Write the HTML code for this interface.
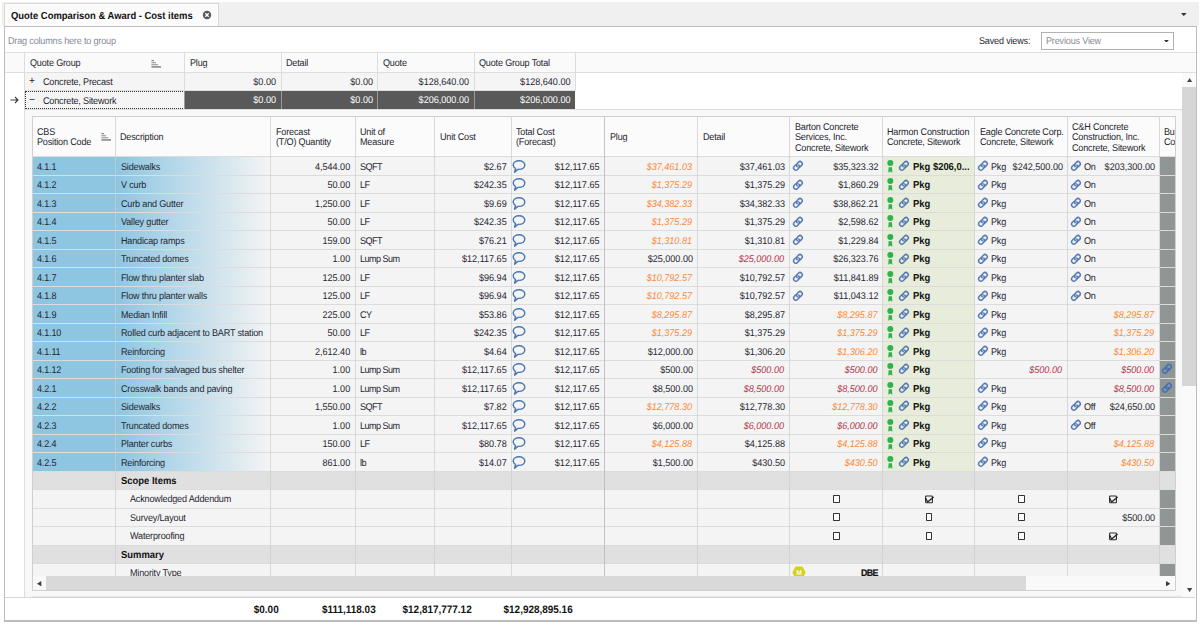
<!DOCTYPE html>
<html><head><meta charset="utf-8"><title>Quote Comparison</title><style>
html,body{margin:0;padding:0;background:#fff;}
body{width:1200px;height:625px;position:relative;overflow:hidden;font-family:"Liberation Sans",sans-serif;font-size:11px;color:#222;text-rendering:geometricPrecision;}
.ab{position:absolute;}
.t{white-space:nowrap;font-size:9.8px;letter-spacing:-0.19px;color:#262630;transform:scaleX(0.925);transform-origin:0 50%;}
.b{font-weight:bold;color:#111;font-size:10.2px;letter-spacing:0;}
.bs{font-family:"Liberation Sans",sans-serif;}
.ra{text-align:right;letter-spacing:0;font-size:9.8px;transform-origin:100% 50%;}
.ra.b{font-size:10.2px;}
.o{color:#fb8935;font-style:italic;margin-left:-1px;}
.r{color:#b4354d;font-style:italic;margin-left:-1px;}
.vl{width:1px;background:#dcdcdc;}
.na{background:rgba(205,205,205,0.72);}
.vd{background:rgba(186,186,186,0.85);}
.hl{height:1px;background:#dcdcdc;}
.cb{width:6.6px;height:7.6px;box-sizing:border-box;border:1.1px solid #333;border-radius:0.8px;background:#fdfdfd;}
</style></head><body>
<div class="ab" style="left:2px;top:2px;width:1197px;height:24px;background:#f0f0f0"></div>
<div class="ab" style="left:4px;top:3.4px;width:215px;height:23.6px;background:#fbfbfb;border:1px solid #d8d8d8;border-bottom:none;box-sizing:border-box"></div>
<div class="ab t b" style="left:11px;top:5.5px;height:22px;line-height:22px;font-size:10.2px">Quote Comparison &amp; Award - Cost items</div>
<svg class="ab" style="left:202px;top:10px" width="10" height="10" viewBox="0 0 10 10"><circle cx="5" cy="5" r="4.2" fill="#555"/><path d="M3.3 3.3 L6.7 6.7 M6.7 3.3 L3.3 6.7" stroke="#fff" stroke-width="1.3"/></svg>
<svg class="ab" style="left:1181.4px;top:12.9px" width="5.6" height="3.1" viewBox="0 0 5.6 3.1"><polygon points="0,0 5.6,0 2.8,3.1" fill="#333"/></svg>
<div class="ab" style="left:4px;top:25.5px;width:1193px;height:596.5px;background:#fff;border:1px solid #bdbdbd;border-bottom:2px solid #bcbcbc;box-sizing:border-box"></div>
<div class="ab t" style="left:8px;top:33px;height:18px;line-height:18px;color:#858b9a">Drag columns here to group</div>
<div class="ab t" style="left:979px;top:33px;height:18px;line-height:18px;">Saved views:</div>
<div class="ab" style="left:1041px;top:32px;width:132.8px;height:17.5px;border:1px solid #b2b2b2;box-sizing:border-box;background:#fff"></div>
<div class="ab t" style="left:1046px;top:33.3px;height:17.5px;line-height:17.5px;color:#8a8a95">Previous View</div>
<svg class="ab" style="left:1164.1px;top:39.7px" width="4.8" height="2.8" viewBox="0 0 4.8 2.8"><polygon points="0,0 4.8,0 2.4,2.8" fill="#333"/></svg>
<div class="ab" style="left:5px;top:52px;width:1191px;height:21px;background:#fafafa;border-top:1px solid #dedede;border-bottom:1px solid #dedede;box-sizing:border-box"></div>
<div class="ab t" style="left:29.5px;top:55.4px;width:100px;height:18px;line-height:18px;">Quote Group</div>
<div class="ab t" style="left:189.5px;top:55.4px;width:100px;height:18px;line-height:18px;">Plug</div>
<div class="ab t" style="left:286.0px;top:55.4px;width:100px;height:18px;line-height:18px;">Detail</div>
<div class="ab t" style="left:382.5px;top:55.4px;width:100px;height:18px;line-height:18px;">Quote</div>
<div class="ab t" style="left:479.0px;top:55.4px;width:100px;height:18px;line-height:18px;">Quote Group Total</div>
<svg class="ab" style="left:151.2px;top:60px" width="11" height="9" viewBox="0 0 11 9"><path d="M0.4 0.6 H3 M0.4 2.7 H5 M0.4 4.8 H7" stroke="#8c8c8c" stroke-width="1.1" fill="none"/><path d="M0.4 6.95 H10" stroke="#6e6e6e" stroke-width="1.3" fill="none"/></svg>
<div class="ab" style="left:25px;top:73px;width:550px;height:17.3px;background:#f5f5f5;border-bottom:1px solid #dedede"></div>
<div class="ab" style="left:25px;top:90.8px;width:550px;height:17.9px;background:#595959"></div>
<div class="ab" style="left:25px;top:90.5px;width:159.5px;height:18.5px;background:#f5f5f5;border:1px dotted #333;box-sizing:border-box"></div>
<div class="ab vl" style="left:24px;top:53px;height:37.5px"></div>
<div class="ab vl" style="left:184px;top:53px;height:37.5px"></div>
<div class="ab vl" style="left:280.5px;top:53px;height:37.5px"></div>
<div class="ab vl" style="left:377px;top:53px;height:37.5px"></div>
<div class="ab vl" style="left:473.5px;top:53px;height:37.5px"></div>
<div class="ab vl" style="left:574.5px;top:53px;height:37.5px"></div>
<div class="ab" style="left:184px;top:90.8px;width:1px;height:17.9px;background:#9a9a9a"></div>
<div class="ab" style="left:280.5px;top:90.8px;width:1px;height:17.9px;background:#9a9a9a"></div>
<div class="ab" style="left:377px;top:90.8px;width:1px;height:17.9px;background:#9a9a9a"></div>
<div class="ab" style="left:473.5px;top:90.8px;width:1px;height:17.9px;background:#9a9a9a"></div>
<div class="ab hl" style="left:25px;top:108.5px;width:1158px"></div>
<div class="ab t" style="left:29px;top:72.4px;width:12px;height:18px;line-height:18px;font-size:11px">+</div>
<div class="ab t" style="left:43.2px;top:73.9px;width:140px;height:18px;line-height:18px;">Concrete, Precast</div>
<div class="ab t" style="left:29px;top:91.2px;width:12px;height:18.5px;line-height:18.5px;font-size:11px">−</div>
<div class="ab t" style="left:43.2px;top:92.9px;width:140px;height:18.5px;line-height:18.5px;">Concrete, Sitework</div>
<svg class="ab" style="left:10px;top:96.3px" width="9" height="8" viewBox="0 0 9 8"><path d="M0.5 4 H8 M5 1 L8 4 L5 7" fill="none" stroke="#383838" stroke-width="1.1"/></svg>
<div class="ab t ra" style="left:184px;top:73.7px;width:92.0px;height:18px;line-height:18px;">$0.00</div>
<div class="ab t ra" style="left:184px;top:91.9px;width:92.0px;height:18.5px;line-height:18.5px;color:#fff">$0.00</div>
<div class="ab t ra" style="left:280.5px;top:73.7px;width:92.0px;height:18px;line-height:18px;">$0.00</div>
<div class="ab t ra" style="left:280.5px;top:91.9px;width:92.0px;height:18.5px;line-height:18.5px;color:#fff">$0.00</div>
<div class="ab t ra" style="left:377px;top:73.7px;width:92.0px;height:18px;line-height:18px;">$128,640.00</div>
<div class="ab t ra" style="left:377px;top:91.9px;width:92.0px;height:18.5px;line-height:18.5px;color:#fff">$206,000.00</div>
<div class="ab t ra" style="left:473.5px;top:73.7px;width:96.5px;height:18px;line-height:18px;">$128,640.00</div>
<div class="ab t ra" style="left:473.5px;top:91.9px;width:96.5px;height:18.5px;line-height:18.5px;color:#fff">$206,000.00</div>
<div class="ab vl" style="left:24px;top:72px;height:525px"></div>
<div class="ab" style="left:25px;top:109.5px;width:1158px;height:487px;background:#f8f8f8"></div>
<div class="ab" style="left:32px;top:116px;width:1143.5px;height:475px;background:#f4f4f4;border:1px solid #cfcfcf;box-sizing:border-box;overflow:hidden"></div>
<div class="ab" style="left:33px;top:117px;width:1141.5px;height:40px;background:#fbfbfb;border-bottom:1px solid #dcdcdc;box-sizing:border-box"></div>
<div class="ab" style="left:33px;top:157.0px;width:82.5px;height:314.16px;background:#8ec6e2"></div>
<div class="ab" style="left:115.5px;top:157.0px;width:155.0px;height:314.16px;background:linear-gradient(to right,#8ec6e2 0%,#f4f4f4 100%)"></div>
<div class="ab" style="left:882.5px;top:157.0px;width:92.0px;height:314.16px;background:#e8eddb"></div>
<div class="ab" style="left:1159.5px;top:157.0px;width:15.0px;height:419.0px;background:#8f9695"></div>
<div class="ab" style="left:33px;top:471.16px;width:1141.5px;height:18.48px;background:#e0e0e0"></div>
<div class="ab" style="left:33px;top:545.08px;width:1141.5px;height:18.48px;background:#e0e0e0"></div>
<div class="ab hl na" style="left:33px;top:174.98px;width:1141.5px"></div>
<div class="ab hl na" style="left:33px;top:193.46px;width:1141.5px"></div>
<div class="ab hl na" style="left:33px;top:211.94px;width:1141.5px"></div>
<div class="ab hl na" style="left:33px;top:230.42px;width:1141.5px"></div>
<div class="ab hl na" style="left:33px;top:248.9px;width:1141.5px"></div>
<div class="ab hl na" style="left:33px;top:267.38px;width:1141.5px"></div>
<div class="ab hl na" style="left:33px;top:285.86px;width:1141.5px"></div>
<div class="ab hl na" style="left:33px;top:304.34px;width:1141.5px"></div>
<div class="ab hl na" style="left:33px;top:322.82px;width:1141.5px"></div>
<div class="ab hl na" style="left:33px;top:341.3px;width:1141.5px"></div>
<div class="ab hl na" style="left:33px;top:359.78px;width:1141.5px"></div>
<div class="ab hl na" style="left:33px;top:378.26px;width:1141.5px"></div>
<div class="ab hl na" style="left:33px;top:396.74px;width:1141.5px"></div>
<div class="ab hl na" style="left:33px;top:415.22px;width:1141.5px"></div>
<div class="ab hl na" style="left:33px;top:433.7px;width:1141.5px"></div>
<div class="ab hl na" style="left:33px;top:452.18px;width:1141.5px"></div>
<div class="ab hl na" style="left:33px;top:470.66px;width:1141.5px"></div>
<div class="ab hl na" style="left:33px;top:489.14px;width:1141.5px"></div>
<div class="ab hl na" style="left:33px;top:507.62px;width:1141.5px"></div>
<div class="ab hl na" style="left:33px;top:526.1px;width:1141.5px"></div>
<div class="ab hl na" style="left:33px;top:544.58px;width:1141.5px"></div>
<div class="ab hl na" style="left:33px;top:563.06px;width:1141.5px"></div>
<div class="ab hl na" style="left:33px;top:581.54px;width:1141.5px"></div>
<div class="ab vl na" style="left:115.0px;top:117px;height:459px"></div>
<div class="ab vl na" style="left:270.0px;top:117px;height:459px"></div>
<div class="ab vl na" style="left:355.0px;top:117px;height:459px"></div>
<div class="ab vl na" style="left:434.0px;top:117px;height:459px"></div>
<div class="ab vl na" style="left:510.5px;top:117px;height:459px"></div>
<div class="ab vl na vd" style="left:604.0px;top:117px;height:459px"></div>
<div class="ab vl na" style="left:697.0px;top:117px;height:459px"></div>
<div class="ab vl na" style="left:789.0px;top:117px;height:459px"></div>
<div class="ab vl na" style="left:882.0px;top:117px;height:459px"></div>
<div class="ab vl na" style="left:974.0px;top:117px;height:459px"></div>
<div class="ab vl na" style="left:1067.0px;top:117px;height:459px"></div>
<div class="ab vl na" style="left:1159.0px;top:117px;height:459px"></div>
<div class="ab t" style="left:37px;top:127.9px;width:200px;height:10.5px;line-height:10.5px;">CBS</div><div class="ab t" style="left:37px;top:138.4px;width:200px;height:10.5px;line-height:10.5px;">Position Code</div>
<svg class="ab" style="left:100.6px;top:132.9px" width="11" height="9" viewBox="0 0 11 9"><path d="M0.4 0.6 H3 M0.4 2.7 H5 M0.4 4.8 H7" stroke="#8c8c8c" stroke-width="1.1" fill="none"/><path d="M0.4 6.95 H10" stroke="#6e6e6e" stroke-width="1.3" fill="none"/></svg>
<div class="ab t" style="left:120px;top:133.15px;width:200px;height:10.5px;line-height:10.5px;">Description</div>
<div class="ab t" style="left:275.5px;top:127.9px;width:200px;height:10.5px;line-height:10.5px;">Forecast</div><div class="ab t" style="left:275.5px;top:138.4px;width:200px;height:10.5px;line-height:10.5px;">(T/O) Quantity</div>
<div class="ab t" style="left:359.5px;top:127.9px;width:200px;height:10.5px;line-height:10.5px;">Unit of</div><div class="ab t" style="left:359.5px;top:138.4px;width:200px;height:10.5px;line-height:10.5px;">Measure</div>
<div class="ab t" style="left:439.5px;top:133.15px;width:200px;height:10.5px;line-height:10.5px;">Unit Cost</div>
<div class="ab t" style="left:516px;top:127.9px;width:200px;height:10.5px;line-height:10.5px;">Total Cost</div><div class="ab t" style="left:516px;top:138.4px;width:200px;height:10.5px;line-height:10.5px;">(Forecast)</div>
<div class="ab t" style="left:609.5px;top:133.15px;width:200px;height:10.5px;line-height:10.5px;">Plug</div>
<div class="ab t" style="left:702.5px;top:133.15px;width:200px;height:10.5px;line-height:10.5px;">Detail</div>
<div class="ab t" style="left:794.5px;top:122.65px;width:200px;height:10.5px;line-height:10.5px;">Barton Concrete</div><div class="ab t" style="left:794.5px;top:133.15px;width:200px;height:10.5px;line-height:10.5px;">Services, Inc.</div><div class="ab t" style="left:794.5px;top:143.65px;width:200px;height:10.5px;line-height:10.5px;">Concrete, Sitework</div>
<div class="ab t" style="left:887px;top:127.9px;width:200px;height:10.5px;line-height:10.5px;">Harmon Construction</div><div class="ab t" style="left:887px;top:138.4px;width:200px;height:10.5px;line-height:10.5px;">Concrete, Sitework</div>
<div class="ab t" style="left:979.5px;top:127.9px;width:200px;height:10.5px;line-height:10.5px;">Eagle Concrete Corp.</div><div class="ab t" style="left:979.5px;top:138.4px;width:200px;height:10.5px;line-height:10.5px;">Concrete, Sitework</div>
<div class="ab t" style="left:1072px;top:122.65px;width:200px;height:10.5px;line-height:10.5px;">C&amp;H Concrete</div><div class="ab t" style="left:1072px;top:133.15px;width:200px;height:10.5px;line-height:10.5px;">Construction, Inc.</div><div class="ab t" style="left:1072px;top:143.65px;width:200px;height:10.5px;line-height:10.5px;">Concrete, Sitework</div>
<div class="ab" style="left:1164px;top:0px;width:11px;height:160px;overflow:hidden"><div class="ab t" style="left:0px;top:127.9px;width:200px;height:10.5px;line-height:10.5px;">Bus</div><div class="ab t" style="left:0px;top:138.4px;width:200px;height:10.5px;line-height:10.5px;">Con</div></div>
<div class="ab t" style="left:37px;top:158.9px;width:80px;height:18.48px;line-height:18.48px;">4.1.1</div>
<div class="ab t" style="left:121px;top:158.9px;width:160px;height:18.48px;line-height:18.48px;">Sidewalks</div>
<div class="ab t ra" style="left:270.5px;top:158.9px;width:79.2px;height:18.48px;line-height:18.48px;">4,544.00</div>
<div class="ab t" style="left:359.5px;top:158.9px;width:80px;height:18.48px;line-height:18.48px;letter-spacing:-0.6px">SQFT</div>
<div class="ab t ra" style="left:434.5px;top:158.9px;width:71.7px;height:18.48px;line-height:18.48px;">$2.67</div>
<svg class="ab" style="left:512.1px;top:160.0px" width="14" height="13" viewBox="0 0 14 13"><path d="M7 0.8 C3.6 0.8 1.2 2.7 1.2 5.1 C1.2 6.6 2.1 7.8 3.5 8.6 L2.6 12.2 L6.2 9.3 C6.5 9.35 6.7 9.4 7 9.4 C10.4 9.4 12.8 7.5 12.8 5.1 C12.8 2.7 10.4 0.8 7 0.8 Z" fill="none" stroke="#4a77b4" stroke-width="1.4" stroke-linejoin="round"/><path d="M3.5 8.6 L2.6 12.2 L5 10.2 Z" fill="#4a77b4"/></svg>
<div class="ab t ra" style="left:511px;top:158.9px;width:88.5px;height:18.48px;line-height:18.48px;">$12,117.65</div>
<div class="ab t ra o" style="left:604.5px;top:158.9px;width:88.0px;height:18.48px;line-height:18.48px;">$37,461.03</div>
<div class="ab t ra" style="left:697.5px;top:158.9px;width:87.0px;height:18.48px;line-height:18.48px;">$37,461.03</div>
<svg class="ab" style="left:792.4px;top:160.2px" width="11.7" height="11.7" viewBox="0 0 11 11"><g fill="none" stroke="#5479b3" stroke-width="1.4" stroke-linecap="round" transform="translate(5.6 5.5) rotate(-45)"><path d="M1.05 0 A2.1 2.1 0 0 1 -1.05 2.1 L-2.75 2.1 A2.1 2.1 0 0 1 -2.75 -2.1 L-1.05 -2.1 A2.1 2.1 0 0 1 0.30 -1.61"/><path d="M-1.05 0 A2.1 2.1 0 0 1 1.05 -2.1 L2.75 -2.1 A2.1 2.1 0 0 1 2.75 2.1 L1.05 2.1 A2.1 2.1 0 0 1 -0.30 1.61"/></g></svg>
<div class="ab t ra" style="left:789.5px;top:158.9px;width:88.5px;height:18.48px;line-height:18.48px;">$35,323.32</div>
<svg class="ab" style="left:887.3px;top:160.0px" width="7" height="14" viewBox="0 0 7 14"><circle cx="3.3" cy="3.1" r="3.0" fill="#2db24c"/><path d="M1.6 7.3 L5.0 7.3 L5.3 12.8 L3.3 11.4 L1.3 12.8 Z" fill="#2db24c"/></svg>
<svg class="ab" style="left:898.1999999999999px;top:160.2px" width="11.7" height="11.7" viewBox="0 0 11 11"><g fill="none" stroke="#5479b3" stroke-width="1.4" stroke-linecap="round" transform="translate(5.6 5.5) rotate(-45)"><path d="M1.05 0 A2.1 2.1 0 0 1 -1.05 2.1 L-2.75 2.1 A2.1 2.1 0 0 1 -2.75 -2.1 L-1.05 -2.1 A2.1 2.1 0 0 1 0.30 -1.61"/><path d="M-1.05 0 A2.1 2.1 0 0 1 1.05 -2.1 L2.75 -2.1 A2.1 2.1 0 0 1 2.75 2.1 L1.05 2.1 A2.1 2.1 0 0 1 -0.30 1.61"/></g></svg>
<div class="ab t b" style="left:913px;top:158.9px;width:63.24324324324324px;height:18.48px;line-height:18.48px;overflow:hidden;white-space:nowrap">Pkg $206,0...</div>
<svg class="ab" style="left:977.4px;top:160.2px" width="11.7" height="11.7" viewBox="0 0 11 11"><g fill="none" stroke="#5479b3" stroke-width="1.4" stroke-linecap="round" transform="translate(5.6 5.5) rotate(-45)"><path d="M1.05 0 A2.1 2.1 0 0 1 -1.05 2.1 L-2.75 2.1 A2.1 2.1 0 0 1 -2.75 -2.1 L-1.05 -2.1 A2.1 2.1 0 0 1 0.30 -1.61"/><path d="M-1.05 0 A2.1 2.1 0 0 1 1.05 -2.1 L2.75 -2.1 A2.1 2.1 0 0 1 2.75 2.1 L1.05 2.1 A2.1 2.1 0 0 1 -0.30 1.61"/></g></svg>
<div class="ab t" style="left:991px;top:158.9px;width:30px;height:18.48px;line-height:18.48px;">Pkg</div>
<div class="ab t ra" style="left:974.5px;top:158.9px;width:88.0px;height:18.48px;line-height:18.48px;">$242,500.00</div>
<svg class="ab" style="left:1069.8000000000002px;top:160.2px" width="11.7" height="11.7" viewBox="0 0 11 11"><g fill="none" stroke="#5479b3" stroke-width="1.4" stroke-linecap="round" transform="translate(5.6 5.5) rotate(-45)"><path d="M1.05 0 A2.1 2.1 0 0 1 -1.05 2.1 L-2.75 2.1 A2.1 2.1 0 0 1 -2.75 -2.1 L-1.05 -2.1 A2.1 2.1 0 0 1 0.30 -1.61"/><path d="M-1.05 0 A2.1 2.1 0 0 1 1.05 -2.1 L2.75 -2.1 A2.1 2.1 0 0 1 2.75 2.1 L1.05 2.1 A2.1 2.1 0 0 1 -0.30 1.61"/></g></svg>
<div class="ab t" style="left:1084px;top:158.9px;width:30px;height:18.48px;line-height:18.48px;">On</div>
<div class="ab t ra" style="left:1067.5px;top:158.9px;width:87.0px;height:18.48px;line-height:18.48px;">$203,300.00</div>
<div class="ab t" style="left:37px;top:177.38px;width:80px;height:18.48px;line-height:18.48px;">4.1.2</div>
<div class="ab t" style="left:121px;top:177.38px;width:160px;height:18.48px;line-height:18.48px;">V curb</div>
<div class="ab t ra" style="left:270.5px;top:177.38px;width:79.2px;height:18.48px;line-height:18.48px;">50.00</div>
<div class="ab t" style="left:359.5px;top:177.38px;width:80px;height:18.48px;line-height:18.48px;letter-spacing:-0.6px">LF</div>
<div class="ab t ra" style="left:434.5px;top:177.38px;width:71.7px;height:18.48px;line-height:18.48px;">$242.35</div>
<svg class="ab" style="left:512.1px;top:178.48px" width="14" height="13" viewBox="0 0 14 13"><path d="M7 0.8 C3.6 0.8 1.2 2.7 1.2 5.1 C1.2 6.6 2.1 7.8 3.5 8.6 L2.6 12.2 L6.2 9.3 C6.5 9.35 6.7 9.4 7 9.4 C10.4 9.4 12.8 7.5 12.8 5.1 C12.8 2.7 10.4 0.8 7 0.8 Z" fill="none" stroke="#4a77b4" stroke-width="1.4" stroke-linejoin="round"/><path d="M3.5 8.6 L2.6 12.2 L5 10.2 Z" fill="#4a77b4"/></svg>
<div class="ab t ra" style="left:511px;top:177.38px;width:88.5px;height:18.48px;line-height:18.48px;">$12,117.65</div>
<div class="ab t ra o" style="left:604.5px;top:177.38px;width:88.0px;height:18.48px;line-height:18.48px;">$1,375.29</div>
<div class="ab t ra" style="left:697.5px;top:177.38px;width:87.0px;height:18.48px;line-height:18.48px;">$1,375.29</div>
<svg class="ab" style="left:792.4px;top:178.67999999999998px" width="11.7" height="11.7" viewBox="0 0 11 11"><g fill="none" stroke="#5479b3" stroke-width="1.4" stroke-linecap="round" transform="translate(5.6 5.5) rotate(-45)"><path d="M1.05 0 A2.1 2.1 0 0 1 -1.05 2.1 L-2.75 2.1 A2.1 2.1 0 0 1 -2.75 -2.1 L-1.05 -2.1 A2.1 2.1 0 0 1 0.30 -1.61"/><path d="M-1.05 0 A2.1 2.1 0 0 1 1.05 -2.1 L2.75 -2.1 A2.1 2.1 0 0 1 2.75 2.1 L1.05 2.1 A2.1 2.1 0 0 1 -0.30 1.61"/></g></svg>
<div class="ab t ra" style="left:789.5px;top:177.38px;width:88.5px;height:18.48px;line-height:18.48px;">$1,860.29</div>
<svg class="ab" style="left:887.3px;top:178.48px" width="7" height="14" viewBox="0 0 7 14"><circle cx="3.3" cy="3.1" r="3.0" fill="#2db24c"/><path d="M1.6 7.3 L5.0 7.3 L5.3 12.8 L3.3 11.4 L1.3 12.8 Z" fill="#2db24c"/></svg>
<svg class="ab" style="left:898.1999999999999px;top:178.67999999999998px" width="11.7" height="11.7" viewBox="0 0 11 11"><g fill="none" stroke="#5479b3" stroke-width="1.4" stroke-linecap="round" transform="translate(5.6 5.5) rotate(-45)"><path d="M1.05 0 A2.1 2.1 0 0 1 -1.05 2.1 L-2.75 2.1 A2.1 2.1 0 0 1 -2.75 -2.1 L-1.05 -2.1 A2.1 2.1 0 0 1 0.30 -1.61"/><path d="M-1.05 0 A2.1 2.1 0 0 1 1.05 -2.1 L2.75 -2.1 A2.1 2.1 0 0 1 2.75 2.1 L1.05 2.1 A2.1 2.1 0 0 1 -0.30 1.61"/></g></svg>
<div class="ab t b" style="left:913px;top:177.38px;width:63.24324324324324px;height:18.48px;line-height:18.48px;overflow:hidden;white-space:nowrap">Pkg</div>
<svg class="ab" style="left:977.4px;top:178.67999999999998px" width="11.7" height="11.7" viewBox="0 0 11 11"><g fill="none" stroke="#5479b3" stroke-width="1.4" stroke-linecap="round" transform="translate(5.6 5.5) rotate(-45)"><path d="M1.05 0 A2.1 2.1 0 0 1 -1.05 2.1 L-2.75 2.1 A2.1 2.1 0 0 1 -2.75 -2.1 L-1.05 -2.1 A2.1 2.1 0 0 1 0.30 -1.61"/><path d="M-1.05 0 A2.1 2.1 0 0 1 1.05 -2.1 L2.75 -2.1 A2.1 2.1 0 0 1 2.75 2.1 L1.05 2.1 A2.1 2.1 0 0 1 -0.30 1.61"/></g></svg>
<div class="ab t" style="left:991px;top:177.38px;width:30px;height:18.48px;line-height:18.48px;">Pkg</div>
<svg class="ab" style="left:1069.8000000000002px;top:178.67999999999998px" width="11.7" height="11.7" viewBox="0 0 11 11"><g fill="none" stroke="#5479b3" stroke-width="1.4" stroke-linecap="round" transform="translate(5.6 5.5) rotate(-45)"><path d="M1.05 0 A2.1 2.1 0 0 1 -1.05 2.1 L-2.75 2.1 A2.1 2.1 0 0 1 -2.75 -2.1 L-1.05 -2.1 A2.1 2.1 0 0 1 0.30 -1.61"/><path d="M-1.05 0 A2.1 2.1 0 0 1 1.05 -2.1 L2.75 -2.1 A2.1 2.1 0 0 1 2.75 2.1 L1.05 2.1 A2.1 2.1 0 0 1 -0.30 1.61"/></g></svg>
<div class="ab t" style="left:1084px;top:177.38px;width:30px;height:18.48px;line-height:18.48px;">On</div>
<div class="ab t" style="left:37px;top:195.86px;width:80px;height:18.48px;line-height:18.48px;">4.1.3</div>
<div class="ab t" style="left:121px;top:195.86px;width:160px;height:18.48px;line-height:18.48px;">Curb and Gutter</div>
<div class="ab t ra" style="left:270.5px;top:195.86px;width:79.2px;height:18.48px;line-height:18.48px;">1,250.00</div>
<div class="ab t" style="left:359.5px;top:195.86px;width:80px;height:18.48px;line-height:18.48px;letter-spacing:-0.6px">LF</div>
<div class="ab t ra" style="left:434.5px;top:195.86px;width:71.7px;height:18.48px;line-height:18.48px;">$9.69</div>
<svg class="ab" style="left:512.1px;top:196.96px" width="14" height="13" viewBox="0 0 14 13"><path d="M7 0.8 C3.6 0.8 1.2 2.7 1.2 5.1 C1.2 6.6 2.1 7.8 3.5 8.6 L2.6 12.2 L6.2 9.3 C6.5 9.35 6.7 9.4 7 9.4 C10.4 9.4 12.8 7.5 12.8 5.1 C12.8 2.7 10.4 0.8 7 0.8 Z" fill="none" stroke="#4a77b4" stroke-width="1.4" stroke-linejoin="round"/><path d="M3.5 8.6 L2.6 12.2 L5 10.2 Z" fill="#4a77b4"/></svg>
<div class="ab t ra" style="left:511px;top:195.86px;width:88.5px;height:18.48px;line-height:18.48px;">$12,117.65</div>
<div class="ab t ra o" style="left:604.5px;top:195.86px;width:88.0px;height:18.48px;line-height:18.48px;">$34,382.33</div>
<div class="ab t ra" style="left:697.5px;top:195.86px;width:87.0px;height:18.48px;line-height:18.48px;">$34,382.33</div>
<svg class="ab" style="left:792.4px;top:197.16px" width="11.7" height="11.7" viewBox="0 0 11 11"><g fill="none" stroke="#5479b3" stroke-width="1.4" stroke-linecap="round" transform="translate(5.6 5.5) rotate(-45)"><path d="M1.05 0 A2.1 2.1 0 0 1 -1.05 2.1 L-2.75 2.1 A2.1 2.1 0 0 1 -2.75 -2.1 L-1.05 -2.1 A2.1 2.1 0 0 1 0.30 -1.61"/><path d="M-1.05 0 A2.1 2.1 0 0 1 1.05 -2.1 L2.75 -2.1 A2.1 2.1 0 0 1 2.75 2.1 L1.05 2.1 A2.1 2.1 0 0 1 -0.30 1.61"/></g></svg>
<div class="ab t ra" style="left:789.5px;top:195.86px;width:88.5px;height:18.48px;line-height:18.48px;">$38,862.21</div>
<svg class="ab" style="left:887.3px;top:196.96px" width="7" height="14" viewBox="0 0 7 14"><circle cx="3.3" cy="3.1" r="3.0" fill="#2db24c"/><path d="M1.6 7.3 L5.0 7.3 L5.3 12.8 L3.3 11.4 L1.3 12.8 Z" fill="#2db24c"/></svg>
<svg class="ab" style="left:898.1999999999999px;top:197.16px" width="11.7" height="11.7" viewBox="0 0 11 11"><g fill="none" stroke="#5479b3" stroke-width="1.4" stroke-linecap="round" transform="translate(5.6 5.5) rotate(-45)"><path d="M1.05 0 A2.1 2.1 0 0 1 -1.05 2.1 L-2.75 2.1 A2.1 2.1 0 0 1 -2.75 -2.1 L-1.05 -2.1 A2.1 2.1 0 0 1 0.30 -1.61"/><path d="M-1.05 0 A2.1 2.1 0 0 1 1.05 -2.1 L2.75 -2.1 A2.1 2.1 0 0 1 2.75 2.1 L1.05 2.1 A2.1 2.1 0 0 1 -0.30 1.61"/></g></svg>
<div class="ab t b" style="left:913px;top:195.86px;width:63.24324324324324px;height:18.48px;line-height:18.48px;overflow:hidden;white-space:nowrap">Pkg</div>
<svg class="ab" style="left:977.4px;top:197.16px" width="11.7" height="11.7" viewBox="0 0 11 11"><g fill="none" stroke="#5479b3" stroke-width="1.4" stroke-linecap="round" transform="translate(5.6 5.5) rotate(-45)"><path d="M1.05 0 A2.1 2.1 0 0 1 -1.05 2.1 L-2.75 2.1 A2.1 2.1 0 0 1 -2.75 -2.1 L-1.05 -2.1 A2.1 2.1 0 0 1 0.30 -1.61"/><path d="M-1.05 0 A2.1 2.1 0 0 1 1.05 -2.1 L2.75 -2.1 A2.1 2.1 0 0 1 2.75 2.1 L1.05 2.1 A2.1 2.1 0 0 1 -0.30 1.61"/></g></svg>
<div class="ab t" style="left:991px;top:195.86px;width:30px;height:18.48px;line-height:18.48px;">Pkg</div>
<svg class="ab" style="left:1069.8000000000002px;top:197.16px" width="11.7" height="11.7" viewBox="0 0 11 11"><g fill="none" stroke="#5479b3" stroke-width="1.4" stroke-linecap="round" transform="translate(5.6 5.5) rotate(-45)"><path d="M1.05 0 A2.1 2.1 0 0 1 -1.05 2.1 L-2.75 2.1 A2.1 2.1 0 0 1 -2.75 -2.1 L-1.05 -2.1 A2.1 2.1 0 0 1 0.30 -1.61"/><path d="M-1.05 0 A2.1 2.1 0 0 1 1.05 -2.1 L2.75 -2.1 A2.1 2.1 0 0 1 2.75 2.1 L1.05 2.1 A2.1 2.1 0 0 1 -0.30 1.61"/></g></svg>
<div class="ab t" style="left:1084px;top:195.86px;width:30px;height:18.48px;line-height:18.48px;">On</div>
<div class="ab t" style="left:37px;top:214.34px;width:80px;height:18.48px;line-height:18.48px;">4.1.4</div>
<div class="ab t" style="left:121px;top:214.34px;width:160px;height:18.48px;line-height:18.48px;">Valley gutter</div>
<div class="ab t ra" style="left:270.5px;top:214.34px;width:79.2px;height:18.48px;line-height:18.48px;">50.00</div>
<div class="ab t" style="left:359.5px;top:214.34px;width:80px;height:18.48px;line-height:18.48px;letter-spacing:-0.6px">LF</div>
<div class="ab t ra" style="left:434.5px;top:214.34px;width:71.7px;height:18.48px;line-height:18.48px;">$242.35</div>
<svg class="ab" style="left:512.1px;top:215.44px" width="14" height="13" viewBox="0 0 14 13"><path d="M7 0.8 C3.6 0.8 1.2 2.7 1.2 5.1 C1.2 6.6 2.1 7.8 3.5 8.6 L2.6 12.2 L6.2 9.3 C6.5 9.35 6.7 9.4 7 9.4 C10.4 9.4 12.8 7.5 12.8 5.1 C12.8 2.7 10.4 0.8 7 0.8 Z" fill="none" stroke="#4a77b4" stroke-width="1.4" stroke-linejoin="round"/><path d="M3.5 8.6 L2.6 12.2 L5 10.2 Z" fill="#4a77b4"/></svg>
<div class="ab t ra" style="left:511px;top:214.34px;width:88.5px;height:18.48px;line-height:18.48px;">$12,117.65</div>
<div class="ab t ra o" style="left:604.5px;top:214.34px;width:88.0px;height:18.48px;line-height:18.48px;">$1,375.29</div>
<div class="ab t ra" style="left:697.5px;top:214.34px;width:87.0px;height:18.48px;line-height:18.48px;">$1,375.29</div>
<svg class="ab" style="left:792.4px;top:215.64px" width="11.7" height="11.7" viewBox="0 0 11 11"><g fill="none" stroke="#5479b3" stroke-width="1.4" stroke-linecap="round" transform="translate(5.6 5.5) rotate(-45)"><path d="M1.05 0 A2.1 2.1 0 0 1 -1.05 2.1 L-2.75 2.1 A2.1 2.1 0 0 1 -2.75 -2.1 L-1.05 -2.1 A2.1 2.1 0 0 1 0.30 -1.61"/><path d="M-1.05 0 A2.1 2.1 0 0 1 1.05 -2.1 L2.75 -2.1 A2.1 2.1 0 0 1 2.75 2.1 L1.05 2.1 A2.1 2.1 0 0 1 -0.30 1.61"/></g></svg>
<div class="ab t ra" style="left:789.5px;top:214.34px;width:88.5px;height:18.48px;line-height:18.48px;">$2,598.62</div>
<svg class="ab" style="left:887.3px;top:215.44px" width="7" height="14" viewBox="0 0 7 14"><circle cx="3.3" cy="3.1" r="3.0" fill="#2db24c"/><path d="M1.6 7.3 L5.0 7.3 L5.3 12.8 L3.3 11.4 L1.3 12.8 Z" fill="#2db24c"/></svg>
<svg class="ab" style="left:898.1999999999999px;top:215.64px" width="11.7" height="11.7" viewBox="0 0 11 11"><g fill="none" stroke="#5479b3" stroke-width="1.4" stroke-linecap="round" transform="translate(5.6 5.5) rotate(-45)"><path d="M1.05 0 A2.1 2.1 0 0 1 -1.05 2.1 L-2.75 2.1 A2.1 2.1 0 0 1 -2.75 -2.1 L-1.05 -2.1 A2.1 2.1 0 0 1 0.30 -1.61"/><path d="M-1.05 0 A2.1 2.1 0 0 1 1.05 -2.1 L2.75 -2.1 A2.1 2.1 0 0 1 2.75 2.1 L1.05 2.1 A2.1 2.1 0 0 1 -0.30 1.61"/></g></svg>
<div class="ab t b" style="left:913px;top:214.34px;width:63.24324324324324px;height:18.48px;line-height:18.48px;overflow:hidden;white-space:nowrap">Pkg</div>
<svg class="ab" style="left:977.4px;top:215.64px" width="11.7" height="11.7" viewBox="0 0 11 11"><g fill="none" stroke="#5479b3" stroke-width="1.4" stroke-linecap="round" transform="translate(5.6 5.5) rotate(-45)"><path d="M1.05 0 A2.1 2.1 0 0 1 -1.05 2.1 L-2.75 2.1 A2.1 2.1 0 0 1 -2.75 -2.1 L-1.05 -2.1 A2.1 2.1 0 0 1 0.30 -1.61"/><path d="M-1.05 0 A2.1 2.1 0 0 1 1.05 -2.1 L2.75 -2.1 A2.1 2.1 0 0 1 2.75 2.1 L1.05 2.1 A2.1 2.1 0 0 1 -0.30 1.61"/></g></svg>
<div class="ab t" style="left:991px;top:214.34px;width:30px;height:18.48px;line-height:18.48px;">Pkg</div>
<svg class="ab" style="left:1069.8000000000002px;top:215.64px" width="11.7" height="11.7" viewBox="0 0 11 11"><g fill="none" stroke="#5479b3" stroke-width="1.4" stroke-linecap="round" transform="translate(5.6 5.5) rotate(-45)"><path d="M1.05 0 A2.1 2.1 0 0 1 -1.05 2.1 L-2.75 2.1 A2.1 2.1 0 0 1 -2.75 -2.1 L-1.05 -2.1 A2.1 2.1 0 0 1 0.30 -1.61"/><path d="M-1.05 0 A2.1 2.1 0 0 1 1.05 -2.1 L2.75 -2.1 A2.1 2.1 0 0 1 2.75 2.1 L1.05 2.1 A2.1 2.1 0 0 1 -0.30 1.61"/></g></svg>
<div class="ab t" style="left:1084px;top:214.34px;width:30px;height:18.48px;line-height:18.48px;">On</div>
<div class="ab t" style="left:37px;top:232.82px;width:80px;height:18.48px;line-height:18.48px;">4.1.5</div>
<div class="ab t" style="left:121px;top:232.82px;width:160px;height:18.48px;line-height:18.48px;">Handicap ramps</div>
<div class="ab t ra" style="left:270.5px;top:232.82px;width:79.2px;height:18.48px;line-height:18.48px;">159.00</div>
<div class="ab t" style="left:359.5px;top:232.82px;width:80px;height:18.48px;line-height:18.48px;letter-spacing:-0.6px">SQFT</div>
<div class="ab t ra" style="left:434.5px;top:232.82px;width:71.7px;height:18.48px;line-height:18.48px;">$76.21</div>
<svg class="ab" style="left:512.1px;top:233.92000000000002px" width="14" height="13" viewBox="0 0 14 13"><path d="M7 0.8 C3.6 0.8 1.2 2.7 1.2 5.1 C1.2 6.6 2.1 7.8 3.5 8.6 L2.6 12.2 L6.2 9.3 C6.5 9.35 6.7 9.4 7 9.4 C10.4 9.4 12.8 7.5 12.8 5.1 C12.8 2.7 10.4 0.8 7 0.8 Z" fill="none" stroke="#4a77b4" stroke-width="1.4" stroke-linejoin="round"/><path d="M3.5 8.6 L2.6 12.2 L5 10.2 Z" fill="#4a77b4"/></svg>
<div class="ab t ra" style="left:511px;top:232.82px;width:88.5px;height:18.48px;line-height:18.48px;">$12,117.65</div>
<div class="ab t ra o" style="left:604.5px;top:232.82px;width:88.0px;height:18.48px;line-height:18.48px;">$1,310.81</div>
<div class="ab t ra" style="left:697.5px;top:232.82px;width:87.0px;height:18.48px;line-height:18.48px;">$1,310.81</div>
<svg class="ab" style="left:792.4px;top:234.12px" width="11.7" height="11.7" viewBox="0 0 11 11"><g fill="none" stroke="#5479b3" stroke-width="1.4" stroke-linecap="round" transform="translate(5.6 5.5) rotate(-45)"><path d="M1.05 0 A2.1 2.1 0 0 1 -1.05 2.1 L-2.75 2.1 A2.1 2.1 0 0 1 -2.75 -2.1 L-1.05 -2.1 A2.1 2.1 0 0 1 0.30 -1.61"/><path d="M-1.05 0 A2.1 2.1 0 0 1 1.05 -2.1 L2.75 -2.1 A2.1 2.1 0 0 1 2.75 2.1 L1.05 2.1 A2.1 2.1 0 0 1 -0.30 1.61"/></g></svg>
<div class="ab t ra" style="left:789.5px;top:232.82px;width:88.5px;height:18.48px;line-height:18.48px;">$1,229.84</div>
<svg class="ab" style="left:887.3px;top:233.92000000000002px" width="7" height="14" viewBox="0 0 7 14"><circle cx="3.3" cy="3.1" r="3.0" fill="#2db24c"/><path d="M1.6 7.3 L5.0 7.3 L5.3 12.8 L3.3 11.4 L1.3 12.8 Z" fill="#2db24c"/></svg>
<svg class="ab" style="left:898.1999999999999px;top:234.12px" width="11.7" height="11.7" viewBox="0 0 11 11"><g fill="none" stroke="#5479b3" stroke-width="1.4" stroke-linecap="round" transform="translate(5.6 5.5) rotate(-45)"><path d="M1.05 0 A2.1 2.1 0 0 1 -1.05 2.1 L-2.75 2.1 A2.1 2.1 0 0 1 -2.75 -2.1 L-1.05 -2.1 A2.1 2.1 0 0 1 0.30 -1.61"/><path d="M-1.05 0 A2.1 2.1 0 0 1 1.05 -2.1 L2.75 -2.1 A2.1 2.1 0 0 1 2.75 2.1 L1.05 2.1 A2.1 2.1 0 0 1 -0.30 1.61"/></g></svg>
<div class="ab t b" style="left:913px;top:232.82px;width:63.24324324324324px;height:18.48px;line-height:18.48px;overflow:hidden;white-space:nowrap">Pkg</div>
<svg class="ab" style="left:977.4px;top:234.12px" width="11.7" height="11.7" viewBox="0 0 11 11"><g fill="none" stroke="#5479b3" stroke-width="1.4" stroke-linecap="round" transform="translate(5.6 5.5) rotate(-45)"><path d="M1.05 0 A2.1 2.1 0 0 1 -1.05 2.1 L-2.75 2.1 A2.1 2.1 0 0 1 -2.75 -2.1 L-1.05 -2.1 A2.1 2.1 0 0 1 0.30 -1.61"/><path d="M-1.05 0 A2.1 2.1 0 0 1 1.05 -2.1 L2.75 -2.1 A2.1 2.1 0 0 1 2.75 2.1 L1.05 2.1 A2.1 2.1 0 0 1 -0.30 1.61"/></g></svg>
<div class="ab t" style="left:991px;top:232.82px;width:30px;height:18.48px;line-height:18.48px;">Pkg</div>
<svg class="ab" style="left:1069.8000000000002px;top:234.12px" width="11.7" height="11.7" viewBox="0 0 11 11"><g fill="none" stroke="#5479b3" stroke-width="1.4" stroke-linecap="round" transform="translate(5.6 5.5) rotate(-45)"><path d="M1.05 0 A2.1 2.1 0 0 1 -1.05 2.1 L-2.75 2.1 A2.1 2.1 0 0 1 -2.75 -2.1 L-1.05 -2.1 A2.1 2.1 0 0 1 0.30 -1.61"/><path d="M-1.05 0 A2.1 2.1 0 0 1 1.05 -2.1 L2.75 -2.1 A2.1 2.1 0 0 1 2.75 2.1 L1.05 2.1 A2.1 2.1 0 0 1 -0.30 1.61"/></g></svg>
<div class="ab t" style="left:1084px;top:232.82px;width:30px;height:18.48px;line-height:18.48px;">On</div>
<div class="ab t" style="left:37px;top:251.3px;width:80px;height:18.48px;line-height:18.48px;">4.1.6</div>
<div class="ab t" style="left:121px;top:251.3px;width:160px;height:18.48px;line-height:18.48px;">Truncated domes</div>
<div class="ab t ra" style="left:270.5px;top:251.3px;width:79.2px;height:18.48px;line-height:18.48px;">1.00</div>
<div class="ab t" style="left:359.5px;top:251.3px;width:80px;height:18.48px;line-height:18.48px;letter-spacing:-0.6px">Lump Sum</div>
<div class="ab t ra" style="left:434.5px;top:251.3px;width:71.7px;height:18.48px;line-height:18.48px;">$12,117.65</div>
<svg class="ab" style="left:512.1px;top:252.4px" width="14" height="13" viewBox="0 0 14 13"><path d="M7 0.8 C3.6 0.8 1.2 2.7 1.2 5.1 C1.2 6.6 2.1 7.8 3.5 8.6 L2.6 12.2 L6.2 9.3 C6.5 9.35 6.7 9.4 7 9.4 C10.4 9.4 12.8 7.5 12.8 5.1 C12.8 2.7 10.4 0.8 7 0.8 Z" fill="none" stroke="#4a77b4" stroke-width="1.4" stroke-linejoin="round"/><path d="M3.5 8.6 L2.6 12.2 L5 10.2 Z" fill="#4a77b4"/></svg>
<div class="ab t ra" style="left:511px;top:251.3px;width:88.5px;height:18.48px;line-height:18.48px;">$12,117.65</div>
<div class="ab t ra" style="left:604.5px;top:251.3px;width:88.0px;height:18.48px;line-height:18.48px;">$25,000.00</div>
<div class="ab t ra r" style="left:697.5px;top:251.3px;width:87.0px;height:18.48px;line-height:18.48px;">$25,000.00</div>
<svg class="ab" style="left:792.4px;top:252.6px" width="11.7" height="11.7" viewBox="0 0 11 11"><g fill="none" stroke="#5479b3" stroke-width="1.4" stroke-linecap="round" transform="translate(5.6 5.5) rotate(-45)"><path d="M1.05 0 A2.1 2.1 0 0 1 -1.05 2.1 L-2.75 2.1 A2.1 2.1 0 0 1 -2.75 -2.1 L-1.05 -2.1 A2.1 2.1 0 0 1 0.30 -1.61"/><path d="M-1.05 0 A2.1 2.1 0 0 1 1.05 -2.1 L2.75 -2.1 A2.1 2.1 0 0 1 2.75 2.1 L1.05 2.1 A2.1 2.1 0 0 1 -0.30 1.61"/></g></svg>
<div class="ab t ra" style="left:789.5px;top:251.3px;width:88.5px;height:18.48px;line-height:18.48px;">$26,323.76</div>
<svg class="ab" style="left:887.3px;top:252.4px" width="7" height="14" viewBox="0 0 7 14"><circle cx="3.3" cy="3.1" r="3.0" fill="#2db24c"/><path d="M1.6 7.3 L5.0 7.3 L5.3 12.8 L3.3 11.4 L1.3 12.8 Z" fill="#2db24c"/></svg>
<svg class="ab" style="left:898.1999999999999px;top:252.6px" width="11.7" height="11.7" viewBox="0 0 11 11"><g fill="none" stroke="#5479b3" stroke-width="1.4" stroke-linecap="round" transform="translate(5.6 5.5) rotate(-45)"><path d="M1.05 0 A2.1 2.1 0 0 1 -1.05 2.1 L-2.75 2.1 A2.1 2.1 0 0 1 -2.75 -2.1 L-1.05 -2.1 A2.1 2.1 0 0 1 0.30 -1.61"/><path d="M-1.05 0 A2.1 2.1 0 0 1 1.05 -2.1 L2.75 -2.1 A2.1 2.1 0 0 1 2.75 2.1 L1.05 2.1 A2.1 2.1 0 0 1 -0.30 1.61"/></g></svg>
<div class="ab t b" style="left:913px;top:251.3px;width:63.24324324324324px;height:18.48px;line-height:18.48px;overflow:hidden;white-space:nowrap">Pkg</div>
<svg class="ab" style="left:977.4px;top:252.6px" width="11.7" height="11.7" viewBox="0 0 11 11"><g fill="none" stroke="#5479b3" stroke-width="1.4" stroke-linecap="round" transform="translate(5.6 5.5) rotate(-45)"><path d="M1.05 0 A2.1 2.1 0 0 1 -1.05 2.1 L-2.75 2.1 A2.1 2.1 0 0 1 -2.75 -2.1 L-1.05 -2.1 A2.1 2.1 0 0 1 0.30 -1.61"/><path d="M-1.05 0 A2.1 2.1 0 0 1 1.05 -2.1 L2.75 -2.1 A2.1 2.1 0 0 1 2.75 2.1 L1.05 2.1 A2.1 2.1 0 0 1 -0.30 1.61"/></g></svg>
<div class="ab t" style="left:991px;top:251.3px;width:30px;height:18.48px;line-height:18.48px;">Pkg</div>
<svg class="ab" style="left:1069.8000000000002px;top:252.6px" width="11.7" height="11.7" viewBox="0 0 11 11"><g fill="none" stroke="#5479b3" stroke-width="1.4" stroke-linecap="round" transform="translate(5.6 5.5) rotate(-45)"><path d="M1.05 0 A2.1 2.1 0 0 1 -1.05 2.1 L-2.75 2.1 A2.1 2.1 0 0 1 -2.75 -2.1 L-1.05 -2.1 A2.1 2.1 0 0 1 0.30 -1.61"/><path d="M-1.05 0 A2.1 2.1 0 0 1 1.05 -2.1 L2.75 -2.1 A2.1 2.1 0 0 1 2.75 2.1 L1.05 2.1 A2.1 2.1 0 0 1 -0.30 1.61"/></g></svg>
<div class="ab t" style="left:1084px;top:251.3px;width:30px;height:18.48px;line-height:18.48px;">On</div>
<div class="ab t" style="left:37px;top:269.78px;width:80px;height:18.48px;line-height:18.48px;">4.1.7</div>
<div class="ab t" style="left:121px;top:269.78px;width:160px;height:18.48px;line-height:18.48px;">Flow thru planter slab</div>
<div class="ab t ra" style="left:270.5px;top:269.78px;width:79.2px;height:18.48px;line-height:18.48px;">125.00</div>
<div class="ab t" style="left:359.5px;top:269.78px;width:80px;height:18.48px;line-height:18.48px;letter-spacing:-0.6px">LF</div>
<div class="ab t ra" style="left:434.5px;top:269.78px;width:71.7px;height:18.48px;line-height:18.48px;">$96.94</div>
<svg class="ab" style="left:512.1px;top:270.88px" width="14" height="13" viewBox="0 0 14 13"><path d="M7 0.8 C3.6 0.8 1.2 2.7 1.2 5.1 C1.2 6.6 2.1 7.8 3.5 8.6 L2.6 12.2 L6.2 9.3 C6.5 9.35 6.7 9.4 7 9.4 C10.4 9.4 12.8 7.5 12.8 5.1 C12.8 2.7 10.4 0.8 7 0.8 Z" fill="none" stroke="#4a77b4" stroke-width="1.4" stroke-linejoin="round"/><path d="M3.5 8.6 L2.6 12.2 L5 10.2 Z" fill="#4a77b4"/></svg>
<div class="ab t ra" style="left:511px;top:269.78px;width:88.5px;height:18.48px;line-height:18.48px;">$12,117.65</div>
<div class="ab t ra o" style="left:604.5px;top:269.78px;width:88.0px;height:18.48px;line-height:18.48px;">$10,792.57</div>
<div class="ab t ra" style="left:697.5px;top:269.78px;width:87.0px;height:18.48px;line-height:18.48px;">$10,792.57</div>
<svg class="ab" style="left:792.4px;top:271.08px" width="11.7" height="11.7" viewBox="0 0 11 11"><g fill="none" stroke="#5479b3" stroke-width="1.4" stroke-linecap="round" transform="translate(5.6 5.5) rotate(-45)"><path d="M1.05 0 A2.1 2.1 0 0 1 -1.05 2.1 L-2.75 2.1 A2.1 2.1 0 0 1 -2.75 -2.1 L-1.05 -2.1 A2.1 2.1 0 0 1 0.30 -1.61"/><path d="M-1.05 0 A2.1 2.1 0 0 1 1.05 -2.1 L2.75 -2.1 A2.1 2.1 0 0 1 2.75 2.1 L1.05 2.1 A2.1 2.1 0 0 1 -0.30 1.61"/></g></svg>
<div class="ab t ra" style="left:789.5px;top:269.78px;width:88.5px;height:18.48px;line-height:18.48px;">$11,841.89</div>
<svg class="ab" style="left:887.3px;top:270.88px" width="7" height="14" viewBox="0 0 7 14"><circle cx="3.3" cy="3.1" r="3.0" fill="#2db24c"/><path d="M1.6 7.3 L5.0 7.3 L5.3 12.8 L3.3 11.4 L1.3 12.8 Z" fill="#2db24c"/></svg>
<svg class="ab" style="left:898.1999999999999px;top:271.08px" width="11.7" height="11.7" viewBox="0 0 11 11"><g fill="none" stroke="#5479b3" stroke-width="1.4" stroke-linecap="round" transform="translate(5.6 5.5) rotate(-45)"><path d="M1.05 0 A2.1 2.1 0 0 1 -1.05 2.1 L-2.75 2.1 A2.1 2.1 0 0 1 -2.75 -2.1 L-1.05 -2.1 A2.1 2.1 0 0 1 0.30 -1.61"/><path d="M-1.05 0 A2.1 2.1 0 0 1 1.05 -2.1 L2.75 -2.1 A2.1 2.1 0 0 1 2.75 2.1 L1.05 2.1 A2.1 2.1 0 0 1 -0.30 1.61"/></g></svg>
<div class="ab t b" style="left:913px;top:269.78px;width:63.24324324324324px;height:18.48px;line-height:18.48px;overflow:hidden;white-space:nowrap">Pkg</div>
<svg class="ab" style="left:977.4px;top:271.08px" width="11.7" height="11.7" viewBox="0 0 11 11"><g fill="none" stroke="#5479b3" stroke-width="1.4" stroke-linecap="round" transform="translate(5.6 5.5) rotate(-45)"><path d="M1.05 0 A2.1 2.1 0 0 1 -1.05 2.1 L-2.75 2.1 A2.1 2.1 0 0 1 -2.75 -2.1 L-1.05 -2.1 A2.1 2.1 0 0 1 0.30 -1.61"/><path d="M-1.05 0 A2.1 2.1 0 0 1 1.05 -2.1 L2.75 -2.1 A2.1 2.1 0 0 1 2.75 2.1 L1.05 2.1 A2.1 2.1 0 0 1 -0.30 1.61"/></g></svg>
<div class="ab t" style="left:991px;top:269.78px;width:30px;height:18.48px;line-height:18.48px;">Pkg</div>
<svg class="ab" style="left:1069.8000000000002px;top:271.08px" width="11.7" height="11.7" viewBox="0 0 11 11"><g fill="none" stroke="#5479b3" stroke-width="1.4" stroke-linecap="round" transform="translate(5.6 5.5) rotate(-45)"><path d="M1.05 0 A2.1 2.1 0 0 1 -1.05 2.1 L-2.75 2.1 A2.1 2.1 0 0 1 -2.75 -2.1 L-1.05 -2.1 A2.1 2.1 0 0 1 0.30 -1.61"/><path d="M-1.05 0 A2.1 2.1 0 0 1 1.05 -2.1 L2.75 -2.1 A2.1 2.1 0 0 1 2.75 2.1 L1.05 2.1 A2.1 2.1 0 0 1 -0.30 1.61"/></g></svg>
<div class="ab t" style="left:1084px;top:269.78px;width:30px;height:18.48px;line-height:18.48px;">On</div>
<div class="ab t" style="left:37px;top:288.26px;width:80px;height:18.48px;line-height:18.48px;">4.1.8</div>
<div class="ab t" style="left:121px;top:288.26px;width:160px;height:18.48px;line-height:18.48px;">Flow thru planter walls</div>
<div class="ab t ra" style="left:270.5px;top:288.26px;width:79.2px;height:18.48px;line-height:18.48px;">125.00</div>
<div class="ab t" style="left:359.5px;top:288.26px;width:80px;height:18.48px;line-height:18.48px;letter-spacing:-0.6px">LF</div>
<div class="ab t ra" style="left:434.5px;top:288.26px;width:71.7px;height:18.48px;line-height:18.48px;">$96.94</div>
<svg class="ab" style="left:512.1px;top:289.36px" width="14" height="13" viewBox="0 0 14 13"><path d="M7 0.8 C3.6 0.8 1.2 2.7 1.2 5.1 C1.2 6.6 2.1 7.8 3.5 8.6 L2.6 12.2 L6.2 9.3 C6.5 9.35 6.7 9.4 7 9.4 C10.4 9.4 12.8 7.5 12.8 5.1 C12.8 2.7 10.4 0.8 7 0.8 Z" fill="none" stroke="#4a77b4" stroke-width="1.4" stroke-linejoin="round"/><path d="M3.5 8.6 L2.6 12.2 L5 10.2 Z" fill="#4a77b4"/></svg>
<div class="ab t ra" style="left:511px;top:288.26px;width:88.5px;height:18.48px;line-height:18.48px;">$12,117.65</div>
<div class="ab t ra o" style="left:604.5px;top:288.26px;width:88.0px;height:18.48px;line-height:18.48px;">$10,792.57</div>
<div class="ab t ra" style="left:697.5px;top:288.26px;width:87.0px;height:18.48px;line-height:18.48px;">$10,792.57</div>
<svg class="ab" style="left:792.4px;top:289.56px" width="11.7" height="11.7" viewBox="0 0 11 11"><g fill="none" stroke="#5479b3" stroke-width="1.4" stroke-linecap="round" transform="translate(5.6 5.5) rotate(-45)"><path d="M1.05 0 A2.1 2.1 0 0 1 -1.05 2.1 L-2.75 2.1 A2.1 2.1 0 0 1 -2.75 -2.1 L-1.05 -2.1 A2.1 2.1 0 0 1 0.30 -1.61"/><path d="M-1.05 0 A2.1 2.1 0 0 1 1.05 -2.1 L2.75 -2.1 A2.1 2.1 0 0 1 2.75 2.1 L1.05 2.1 A2.1 2.1 0 0 1 -0.30 1.61"/></g></svg>
<div class="ab t ra" style="left:789.5px;top:288.26px;width:88.5px;height:18.48px;line-height:18.48px;">$11,043.12</div>
<svg class="ab" style="left:887.3px;top:289.36px" width="7" height="14" viewBox="0 0 7 14"><circle cx="3.3" cy="3.1" r="3.0" fill="#2db24c"/><path d="M1.6 7.3 L5.0 7.3 L5.3 12.8 L3.3 11.4 L1.3 12.8 Z" fill="#2db24c"/></svg>
<svg class="ab" style="left:898.1999999999999px;top:289.56px" width="11.7" height="11.7" viewBox="0 0 11 11"><g fill="none" stroke="#5479b3" stroke-width="1.4" stroke-linecap="round" transform="translate(5.6 5.5) rotate(-45)"><path d="M1.05 0 A2.1 2.1 0 0 1 -1.05 2.1 L-2.75 2.1 A2.1 2.1 0 0 1 -2.75 -2.1 L-1.05 -2.1 A2.1 2.1 0 0 1 0.30 -1.61"/><path d="M-1.05 0 A2.1 2.1 0 0 1 1.05 -2.1 L2.75 -2.1 A2.1 2.1 0 0 1 2.75 2.1 L1.05 2.1 A2.1 2.1 0 0 1 -0.30 1.61"/></g></svg>
<div class="ab t b" style="left:913px;top:288.26px;width:63.24324324324324px;height:18.48px;line-height:18.48px;overflow:hidden;white-space:nowrap">Pkg</div>
<svg class="ab" style="left:977.4px;top:289.56px" width="11.7" height="11.7" viewBox="0 0 11 11"><g fill="none" stroke="#5479b3" stroke-width="1.4" stroke-linecap="round" transform="translate(5.6 5.5) rotate(-45)"><path d="M1.05 0 A2.1 2.1 0 0 1 -1.05 2.1 L-2.75 2.1 A2.1 2.1 0 0 1 -2.75 -2.1 L-1.05 -2.1 A2.1 2.1 0 0 1 0.30 -1.61"/><path d="M-1.05 0 A2.1 2.1 0 0 1 1.05 -2.1 L2.75 -2.1 A2.1 2.1 0 0 1 2.75 2.1 L1.05 2.1 A2.1 2.1 0 0 1 -0.30 1.61"/></g></svg>
<div class="ab t" style="left:991px;top:288.26px;width:30px;height:18.48px;line-height:18.48px;">Pkg</div>
<svg class="ab" style="left:1069.8000000000002px;top:289.56px" width="11.7" height="11.7" viewBox="0 0 11 11"><g fill="none" stroke="#5479b3" stroke-width="1.4" stroke-linecap="round" transform="translate(5.6 5.5) rotate(-45)"><path d="M1.05 0 A2.1 2.1 0 0 1 -1.05 2.1 L-2.75 2.1 A2.1 2.1 0 0 1 -2.75 -2.1 L-1.05 -2.1 A2.1 2.1 0 0 1 0.30 -1.61"/><path d="M-1.05 0 A2.1 2.1 0 0 1 1.05 -2.1 L2.75 -2.1 A2.1 2.1 0 0 1 2.75 2.1 L1.05 2.1 A2.1 2.1 0 0 1 -0.30 1.61"/></g></svg>
<div class="ab t" style="left:1084px;top:288.26px;width:30px;height:18.48px;line-height:18.48px;">On</div>
<div class="ab t" style="left:37px;top:306.74px;width:80px;height:18.48px;line-height:18.48px;">4.1.9</div>
<div class="ab t" style="left:121px;top:306.74px;width:160px;height:18.48px;line-height:18.48px;">Median Infill</div>
<div class="ab t ra" style="left:270.5px;top:306.74px;width:79.2px;height:18.48px;line-height:18.48px;">225.00</div>
<div class="ab t" style="left:359.5px;top:306.74px;width:80px;height:18.48px;line-height:18.48px;letter-spacing:-0.6px">CY</div>
<div class="ab t ra" style="left:434.5px;top:306.74px;width:71.7px;height:18.48px;line-height:18.48px;">$53.86</div>
<svg class="ab" style="left:512.1px;top:307.84000000000003px" width="14" height="13" viewBox="0 0 14 13"><path d="M7 0.8 C3.6 0.8 1.2 2.7 1.2 5.1 C1.2 6.6 2.1 7.8 3.5 8.6 L2.6 12.2 L6.2 9.3 C6.5 9.35 6.7 9.4 7 9.4 C10.4 9.4 12.8 7.5 12.8 5.1 C12.8 2.7 10.4 0.8 7 0.8 Z" fill="none" stroke="#4a77b4" stroke-width="1.4" stroke-linejoin="round"/><path d="M3.5 8.6 L2.6 12.2 L5 10.2 Z" fill="#4a77b4"/></svg>
<div class="ab t ra" style="left:511px;top:306.74px;width:88.5px;height:18.48px;line-height:18.48px;">$12,117.65</div>
<div class="ab t ra o" style="left:604.5px;top:306.74px;width:88.0px;height:18.48px;line-height:18.48px;">$8,295.87</div>
<div class="ab t ra" style="left:697.5px;top:306.74px;width:87.0px;height:18.48px;line-height:18.48px;">$8,295.87</div>
<div class="ab t ra o" style="left:789.5px;top:306.74px;width:88.5px;height:18.48px;line-height:18.48px;">$8,295.87</div>
<svg class="ab" style="left:887.3px;top:307.84000000000003px" width="7" height="14" viewBox="0 0 7 14"><circle cx="3.3" cy="3.1" r="3.0" fill="#2db24c"/><path d="M1.6 7.3 L5.0 7.3 L5.3 12.8 L3.3 11.4 L1.3 12.8 Z" fill="#2db24c"/></svg>
<svg class="ab" style="left:898.1999999999999px;top:308.04px" width="11.7" height="11.7" viewBox="0 0 11 11"><g fill="none" stroke="#5479b3" stroke-width="1.4" stroke-linecap="round" transform="translate(5.6 5.5) rotate(-45)"><path d="M1.05 0 A2.1 2.1 0 0 1 -1.05 2.1 L-2.75 2.1 A2.1 2.1 0 0 1 -2.75 -2.1 L-1.05 -2.1 A2.1 2.1 0 0 1 0.30 -1.61"/><path d="M-1.05 0 A2.1 2.1 0 0 1 1.05 -2.1 L2.75 -2.1 A2.1 2.1 0 0 1 2.75 2.1 L1.05 2.1 A2.1 2.1 0 0 1 -0.30 1.61"/></g></svg>
<div class="ab t b" style="left:913px;top:306.74px;width:63.24324324324324px;height:18.48px;line-height:18.48px;overflow:hidden;white-space:nowrap">Pkg</div>
<svg class="ab" style="left:977.4px;top:308.04px" width="11.7" height="11.7" viewBox="0 0 11 11"><g fill="none" stroke="#5479b3" stroke-width="1.4" stroke-linecap="round" transform="translate(5.6 5.5) rotate(-45)"><path d="M1.05 0 A2.1 2.1 0 0 1 -1.05 2.1 L-2.75 2.1 A2.1 2.1 0 0 1 -2.75 -2.1 L-1.05 -2.1 A2.1 2.1 0 0 1 0.30 -1.61"/><path d="M-1.05 0 A2.1 2.1 0 0 1 1.05 -2.1 L2.75 -2.1 A2.1 2.1 0 0 1 2.75 2.1 L1.05 2.1 A2.1 2.1 0 0 1 -0.30 1.61"/></g></svg>
<div class="ab t" style="left:991px;top:306.74px;width:30px;height:18.48px;line-height:18.48px;">Pkg</div>
<div class="ab t ra o" style="left:1067.5px;top:306.74px;width:87.0px;height:18.48px;line-height:18.48px;">$8,295.87</div>
<div class="ab t" style="left:37px;top:325.22px;width:80px;height:18.48px;line-height:18.48px;">4.1.10</div>
<div class="ab t" style="left:121px;top:325.22px;width:160px;height:18.48px;line-height:18.48px;">Rolled curb adjacent to BART station</div>
<div class="ab t ra" style="left:270.5px;top:325.22px;width:79.2px;height:18.48px;line-height:18.48px;">50.00</div>
<div class="ab t" style="left:359.5px;top:325.22px;width:80px;height:18.48px;line-height:18.48px;letter-spacing:-0.6px">LF</div>
<div class="ab t ra" style="left:434.5px;top:325.22px;width:71.7px;height:18.48px;line-height:18.48px;">$242.35</div>
<svg class="ab" style="left:512.1px;top:326.32px" width="14" height="13" viewBox="0 0 14 13"><path d="M7 0.8 C3.6 0.8 1.2 2.7 1.2 5.1 C1.2 6.6 2.1 7.8 3.5 8.6 L2.6 12.2 L6.2 9.3 C6.5 9.35 6.7 9.4 7 9.4 C10.4 9.4 12.8 7.5 12.8 5.1 C12.8 2.7 10.4 0.8 7 0.8 Z" fill="none" stroke="#4a77b4" stroke-width="1.4" stroke-linejoin="round"/><path d="M3.5 8.6 L2.6 12.2 L5 10.2 Z" fill="#4a77b4"/></svg>
<div class="ab t ra" style="left:511px;top:325.22px;width:88.5px;height:18.48px;line-height:18.48px;">$12,117.65</div>
<div class="ab t ra o" style="left:604.5px;top:325.22px;width:88.0px;height:18.48px;line-height:18.48px;">$1,375.29</div>
<div class="ab t ra" style="left:697.5px;top:325.22px;width:87.0px;height:18.48px;line-height:18.48px;">$1,375.29</div>
<div class="ab t ra o" style="left:789.5px;top:325.22px;width:88.5px;height:18.48px;line-height:18.48px;">$1,375.29</div>
<svg class="ab" style="left:887.3px;top:326.32px" width="7" height="14" viewBox="0 0 7 14"><circle cx="3.3" cy="3.1" r="3.0" fill="#2db24c"/><path d="M1.6 7.3 L5.0 7.3 L5.3 12.8 L3.3 11.4 L1.3 12.8 Z" fill="#2db24c"/></svg>
<svg class="ab" style="left:898.1999999999999px;top:326.52px" width="11.7" height="11.7" viewBox="0 0 11 11"><g fill="none" stroke="#5479b3" stroke-width="1.4" stroke-linecap="round" transform="translate(5.6 5.5) rotate(-45)"><path d="M1.05 0 A2.1 2.1 0 0 1 -1.05 2.1 L-2.75 2.1 A2.1 2.1 0 0 1 -2.75 -2.1 L-1.05 -2.1 A2.1 2.1 0 0 1 0.30 -1.61"/><path d="M-1.05 0 A2.1 2.1 0 0 1 1.05 -2.1 L2.75 -2.1 A2.1 2.1 0 0 1 2.75 2.1 L1.05 2.1 A2.1 2.1 0 0 1 -0.30 1.61"/></g></svg>
<div class="ab t b" style="left:913px;top:325.22px;width:63.24324324324324px;height:18.48px;line-height:18.48px;overflow:hidden;white-space:nowrap">Pkg</div>
<svg class="ab" style="left:977.4px;top:326.52px" width="11.7" height="11.7" viewBox="0 0 11 11"><g fill="none" stroke="#5479b3" stroke-width="1.4" stroke-linecap="round" transform="translate(5.6 5.5) rotate(-45)"><path d="M1.05 0 A2.1 2.1 0 0 1 -1.05 2.1 L-2.75 2.1 A2.1 2.1 0 0 1 -2.75 -2.1 L-1.05 -2.1 A2.1 2.1 0 0 1 0.30 -1.61"/><path d="M-1.05 0 A2.1 2.1 0 0 1 1.05 -2.1 L2.75 -2.1 A2.1 2.1 0 0 1 2.75 2.1 L1.05 2.1 A2.1 2.1 0 0 1 -0.30 1.61"/></g></svg>
<div class="ab t" style="left:991px;top:325.22px;width:30px;height:18.48px;line-height:18.48px;">Pkg</div>
<div class="ab t ra o" style="left:1067.5px;top:325.22px;width:87.0px;height:18.48px;line-height:18.48px;">$1,375.29</div>
<div class="ab t" style="left:37px;top:343.7px;width:80px;height:18.48px;line-height:18.48px;">4.1.11</div>
<div class="ab t" style="left:121px;top:343.7px;width:160px;height:18.48px;line-height:18.48px;">Reinforcing</div>
<div class="ab t ra" style="left:270.5px;top:343.7px;width:79.2px;height:18.48px;line-height:18.48px;">2,612.40</div>
<div class="ab t" style="left:359.5px;top:343.7px;width:80px;height:18.48px;line-height:18.48px;letter-spacing:-0.6px">lb</div>
<div class="ab t ra" style="left:434.5px;top:343.7px;width:71.7px;height:18.48px;line-height:18.48px;">$4.64</div>
<svg class="ab" style="left:512.1px;top:344.8px" width="14" height="13" viewBox="0 0 14 13"><path d="M7 0.8 C3.6 0.8 1.2 2.7 1.2 5.1 C1.2 6.6 2.1 7.8 3.5 8.6 L2.6 12.2 L6.2 9.3 C6.5 9.35 6.7 9.4 7 9.4 C10.4 9.4 12.8 7.5 12.8 5.1 C12.8 2.7 10.4 0.8 7 0.8 Z" fill="none" stroke="#4a77b4" stroke-width="1.4" stroke-linejoin="round"/><path d="M3.5 8.6 L2.6 12.2 L5 10.2 Z" fill="#4a77b4"/></svg>
<div class="ab t ra" style="left:511px;top:343.7px;width:88.5px;height:18.48px;line-height:18.48px;">$12,117.65</div>
<div class="ab t ra" style="left:604.5px;top:343.7px;width:88.0px;height:18.48px;line-height:18.48px;">$12,000.00</div>
<div class="ab t ra" style="left:697.5px;top:343.7px;width:87.0px;height:18.48px;line-height:18.48px;">$1,306.20</div>
<div class="ab t ra o" style="left:789.5px;top:343.7px;width:88.5px;height:18.48px;line-height:18.48px;">$1,306.20</div>
<svg class="ab" style="left:887.3px;top:344.8px" width="7" height="14" viewBox="0 0 7 14"><circle cx="3.3" cy="3.1" r="3.0" fill="#2db24c"/><path d="M1.6 7.3 L5.0 7.3 L5.3 12.8 L3.3 11.4 L1.3 12.8 Z" fill="#2db24c"/></svg>
<svg class="ab" style="left:898.1999999999999px;top:345.0px" width="11.7" height="11.7" viewBox="0 0 11 11"><g fill="none" stroke="#5479b3" stroke-width="1.4" stroke-linecap="round" transform="translate(5.6 5.5) rotate(-45)"><path d="M1.05 0 A2.1 2.1 0 0 1 -1.05 2.1 L-2.75 2.1 A2.1 2.1 0 0 1 -2.75 -2.1 L-1.05 -2.1 A2.1 2.1 0 0 1 0.30 -1.61"/><path d="M-1.05 0 A2.1 2.1 0 0 1 1.05 -2.1 L2.75 -2.1 A2.1 2.1 0 0 1 2.75 2.1 L1.05 2.1 A2.1 2.1 0 0 1 -0.30 1.61"/></g></svg>
<div class="ab t b" style="left:913px;top:343.7px;width:63.24324324324324px;height:18.48px;line-height:18.48px;overflow:hidden;white-space:nowrap">Pkg</div>
<svg class="ab" style="left:977.4px;top:345.0px" width="11.7" height="11.7" viewBox="0 0 11 11"><g fill="none" stroke="#5479b3" stroke-width="1.4" stroke-linecap="round" transform="translate(5.6 5.5) rotate(-45)"><path d="M1.05 0 A2.1 2.1 0 0 1 -1.05 2.1 L-2.75 2.1 A2.1 2.1 0 0 1 -2.75 -2.1 L-1.05 -2.1 A2.1 2.1 0 0 1 0.30 -1.61"/><path d="M-1.05 0 A2.1 2.1 0 0 1 1.05 -2.1 L2.75 -2.1 A2.1 2.1 0 0 1 2.75 2.1 L1.05 2.1 A2.1 2.1 0 0 1 -0.30 1.61"/></g></svg>
<div class="ab t" style="left:991px;top:343.7px;width:30px;height:18.48px;line-height:18.48px;">Pkg</div>
<div class="ab t ra o" style="left:1067.5px;top:343.7px;width:87.0px;height:18.48px;line-height:18.48px;">$1,306.20</div>
<div class="ab t" style="left:37px;top:362.18px;width:80px;height:18.48px;line-height:18.48px;">4.1.12</div>
<div class="ab t" style="left:121px;top:362.18px;width:160px;height:18.48px;line-height:18.48px;">Footing for salvaged bus shelter</div>
<div class="ab t ra" style="left:270.5px;top:362.18px;width:79.2px;height:18.48px;line-height:18.48px;">1.00</div>
<div class="ab t" style="left:359.5px;top:362.18px;width:80px;height:18.48px;line-height:18.48px;letter-spacing:-0.6px">Lump Sum</div>
<div class="ab t ra" style="left:434.5px;top:362.18px;width:71.7px;height:18.48px;line-height:18.48px;">$12,117.65</div>
<svg class="ab" style="left:512.1px;top:363.28px" width="14" height="13" viewBox="0 0 14 13"><path d="M7 0.8 C3.6 0.8 1.2 2.7 1.2 5.1 C1.2 6.6 2.1 7.8 3.5 8.6 L2.6 12.2 L6.2 9.3 C6.5 9.35 6.7 9.4 7 9.4 C10.4 9.4 12.8 7.5 12.8 5.1 C12.8 2.7 10.4 0.8 7 0.8 Z" fill="none" stroke="#4a77b4" stroke-width="1.4" stroke-linejoin="round"/><path d="M3.5 8.6 L2.6 12.2 L5 10.2 Z" fill="#4a77b4"/></svg>
<div class="ab t ra" style="left:511px;top:362.18px;width:88.5px;height:18.48px;line-height:18.48px;">$12,117.65</div>
<div class="ab t ra" style="left:604.5px;top:362.18px;width:88.0px;height:18.48px;line-height:18.48px;">$500.00</div>
<div class="ab t ra r" style="left:697.5px;top:362.18px;width:87.0px;height:18.48px;line-height:18.48px;">$500.00</div>
<div class="ab t ra r" style="left:789.5px;top:362.18px;width:88.5px;height:18.48px;line-height:18.48px;">$500.00</div>
<svg class="ab" style="left:887.3px;top:363.28px" width="7" height="14" viewBox="0 0 7 14"><circle cx="3.3" cy="3.1" r="3.0" fill="#2db24c"/><path d="M1.6 7.3 L5.0 7.3 L5.3 12.8 L3.3 11.4 L1.3 12.8 Z" fill="#2db24c"/></svg>
<svg class="ab" style="left:898.1999999999999px;top:363.47999999999996px" width="11.7" height="11.7" viewBox="0 0 11 11"><g fill="none" stroke="#5479b3" stroke-width="1.4" stroke-linecap="round" transform="translate(5.6 5.5) rotate(-45)"><path d="M1.05 0 A2.1 2.1 0 0 1 -1.05 2.1 L-2.75 2.1 A2.1 2.1 0 0 1 -2.75 -2.1 L-1.05 -2.1 A2.1 2.1 0 0 1 0.30 -1.61"/><path d="M-1.05 0 A2.1 2.1 0 0 1 1.05 -2.1 L2.75 -2.1 A2.1 2.1 0 0 1 2.75 2.1 L1.05 2.1 A2.1 2.1 0 0 1 -0.30 1.61"/></g></svg>
<div class="ab t b" style="left:913px;top:362.18px;width:63.24324324324324px;height:18.48px;line-height:18.48px;overflow:hidden;white-space:nowrap">Pkg</div>
<div class="ab t ra r" style="left:974.5px;top:362.18px;width:88.0px;height:18.48px;line-height:18.48px;">$500.00</div>
<div class="ab t ra r" style="left:1067.5px;top:362.18px;width:87.0px;height:18.48px;line-height:18.48px;">$500.00</div>
<svg class="ab" style="left:1161.2px;top:363.47999999999996px" width="11.7" height="11.7" viewBox="0 0 11 11"><g fill="none" stroke="#3f6fb6" stroke-width="1.4" stroke-linecap="round" transform="translate(5.6 5.5) rotate(-45)"><path d="M1.05 0 A2.1 2.1 0 0 1 -1.05 2.1 L-2.75 2.1 A2.1 2.1 0 0 1 -2.75 -2.1 L-1.05 -2.1 A2.1 2.1 0 0 1 0.30 -1.61"/><path d="M-1.05 0 A2.1 2.1 0 0 1 1.05 -2.1 L2.75 -2.1 A2.1 2.1 0 0 1 2.75 2.1 L1.05 2.1 A2.1 2.1 0 0 1 -0.30 1.61"/></g></svg>
<div class="ab t" style="left:37px;top:380.66px;width:80px;height:18.48px;line-height:18.48px;">4.2.1</div>
<div class="ab t" style="left:121px;top:380.66px;width:160px;height:18.48px;line-height:18.48px;">Crosswalk bands and paving</div>
<div class="ab t ra" style="left:270.5px;top:380.66px;width:79.2px;height:18.48px;line-height:18.48px;">1.00</div>
<div class="ab t" style="left:359.5px;top:380.66px;width:80px;height:18.48px;line-height:18.48px;letter-spacing:-0.6px">Lump Sum</div>
<div class="ab t ra" style="left:434.5px;top:380.66px;width:71.7px;height:18.48px;line-height:18.48px;">$12,117.65</div>
<svg class="ab" style="left:512.1px;top:381.76px" width="14" height="13" viewBox="0 0 14 13"><path d="M7 0.8 C3.6 0.8 1.2 2.7 1.2 5.1 C1.2 6.6 2.1 7.8 3.5 8.6 L2.6 12.2 L6.2 9.3 C6.5 9.35 6.7 9.4 7 9.4 C10.4 9.4 12.8 7.5 12.8 5.1 C12.8 2.7 10.4 0.8 7 0.8 Z" fill="none" stroke="#4a77b4" stroke-width="1.4" stroke-linejoin="round"/><path d="M3.5 8.6 L2.6 12.2 L5 10.2 Z" fill="#4a77b4"/></svg>
<div class="ab t ra" style="left:511px;top:380.66px;width:88.5px;height:18.48px;line-height:18.48px;">$12,117.65</div>
<div class="ab t ra" style="left:604.5px;top:380.66px;width:88.0px;height:18.48px;line-height:18.48px;">$8,500.00</div>
<div class="ab t ra r" style="left:697.5px;top:380.66px;width:87.0px;height:18.48px;line-height:18.48px;">$8,500.00</div>
<div class="ab t ra r" style="left:789.5px;top:380.66px;width:88.5px;height:18.48px;line-height:18.48px;">$8,500.00</div>
<svg class="ab" style="left:887.3px;top:381.76px" width="7" height="14" viewBox="0 0 7 14"><circle cx="3.3" cy="3.1" r="3.0" fill="#2db24c"/><path d="M1.6 7.3 L5.0 7.3 L5.3 12.8 L3.3 11.4 L1.3 12.8 Z" fill="#2db24c"/></svg>
<svg class="ab" style="left:898.1999999999999px;top:381.96px" width="11.7" height="11.7" viewBox="0 0 11 11"><g fill="none" stroke="#5479b3" stroke-width="1.4" stroke-linecap="round" transform="translate(5.6 5.5) rotate(-45)"><path d="M1.05 0 A2.1 2.1 0 0 1 -1.05 2.1 L-2.75 2.1 A2.1 2.1 0 0 1 -2.75 -2.1 L-1.05 -2.1 A2.1 2.1 0 0 1 0.30 -1.61"/><path d="M-1.05 0 A2.1 2.1 0 0 1 1.05 -2.1 L2.75 -2.1 A2.1 2.1 0 0 1 2.75 2.1 L1.05 2.1 A2.1 2.1 0 0 1 -0.30 1.61"/></g></svg>
<div class="ab t b" style="left:913px;top:380.66px;width:63.24324324324324px;height:18.48px;line-height:18.48px;overflow:hidden;white-space:nowrap">Pkg</div>
<svg class="ab" style="left:977.4px;top:381.96px" width="11.7" height="11.7" viewBox="0 0 11 11"><g fill="none" stroke="#5479b3" stroke-width="1.4" stroke-linecap="round" transform="translate(5.6 5.5) rotate(-45)"><path d="M1.05 0 A2.1 2.1 0 0 1 -1.05 2.1 L-2.75 2.1 A2.1 2.1 0 0 1 -2.75 -2.1 L-1.05 -2.1 A2.1 2.1 0 0 1 0.30 -1.61"/><path d="M-1.05 0 A2.1 2.1 0 0 1 1.05 -2.1 L2.75 -2.1 A2.1 2.1 0 0 1 2.75 2.1 L1.05 2.1 A2.1 2.1 0 0 1 -0.30 1.61"/></g></svg>
<div class="ab t" style="left:991px;top:380.66px;width:30px;height:18.48px;line-height:18.48px;">Pkg</div>
<div class="ab t ra r" style="left:1067.5px;top:380.66px;width:87.0px;height:18.48px;line-height:18.48px;">$8,500.00</div>
<svg class="ab" style="left:1161.2px;top:381.96px" width="11.7" height="11.7" viewBox="0 0 11 11"><g fill="none" stroke="#3f6fb6" stroke-width="1.4" stroke-linecap="round" transform="translate(5.6 5.5) rotate(-45)"><path d="M1.05 0 A2.1 2.1 0 0 1 -1.05 2.1 L-2.75 2.1 A2.1 2.1 0 0 1 -2.75 -2.1 L-1.05 -2.1 A2.1 2.1 0 0 1 0.30 -1.61"/><path d="M-1.05 0 A2.1 2.1 0 0 1 1.05 -2.1 L2.75 -2.1 A2.1 2.1 0 0 1 2.75 2.1 L1.05 2.1 A2.1 2.1 0 0 1 -0.30 1.61"/></g></svg>
<div class="ab t" style="left:37px;top:399.14px;width:80px;height:18.48px;line-height:18.48px;">4.2.2</div>
<div class="ab t" style="left:121px;top:399.14px;width:160px;height:18.48px;line-height:18.48px;">Sidewalks</div>
<div class="ab t ra" style="left:270.5px;top:399.14px;width:79.2px;height:18.48px;line-height:18.48px;">1,550.00</div>
<div class="ab t" style="left:359.5px;top:399.14px;width:80px;height:18.48px;line-height:18.48px;letter-spacing:-0.6px">SQFT</div>
<div class="ab t ra" style="left:434.5px;top:399.14px;width:71.7px;height:18.48px;line-height:18.48px;">$7.82</div>
<svg class="ab" style="left:512.1px;top:400.24px" width="14" height="13" viewBox="0 0 14 13"><path d="M7 0.8 C3.6 0.8 1.2 2.7 1.2 5.1 C1.2 6.6 2.1 7.8 3.5 8.6 L2.6 12.2 L6.2 9.3 C6.5 9.35 6.7 9.4 7 9.4 C10.4 9.4 12.8 7.5 12.8 5.1 C12.8 2.7 10.4 0.8 7 0.8 Z" fill="none" stroke="#4a77b4" stroke-width="1.4" stroke-linejoin="round"/><path d="M3.5 8.6 L2.6 12.2 L5 10.2 Z" fill="#4a77b4"/></svg>
<div class="ab t ra" style="left:511px;top:399.14px;width:88.5px;height:18.48px;line-height:18.48px;">$12,117.65</div>
<div class="ab t ra o" style="left:604.5px;top:399.14px;width:88.0px;height:18.48px;line-height:18.48px;">$12,778.30</div>
<div class="ab t ra" style="left:697.5px;top:399.14px;width:87.0px;height:18.48px;line-height:18.48px;">$12,778.30</div>
<div class="ab t ra o" style="left:789.5px;top:399.14px;width:88.5px;height:18.48px;line-height:18.48px;">$12,778.30</div>
<svg class="ab" style="left:887.3px;top:400.24px" width="7" height="14" viewBox="0 0 7 14"><circle cx="3.3" cy="3.1" r="3.0" fill="#2db24c"/><path d="M1.6 7.3 L5.0 7.3 L5.3 12.8 L3.3 11.4 L1.3 12.8 Z" fill="#2db24c"/></svg>
<svg class="ab" style="left:898.1999999999999px;top:400.44px" width="11.7" height="11.7" viewBox="0 0 11 11"><g fill="none" stroke="#5479b3" stroke-width="1.4" stroke-linecap="round" transform="translate(5.6 5.5) rotate(-45)"><path d="M1.05 0 A2.1 2.1 0 0 1 -1.05 2.1 L-2.75 2.1 A2.1 2.1 0 0 1 -2.75 -2.1 L-1.05 -2.1 A2.1 2.1 0 0 1 0.30 -1.61"/><path d="M-1.05 0 A2.1 2.1 0 0 1 1.05 -2.1 L2.75 -2.1 A2.1 2.1 0 0 1 2.75 2.1 L1.05 2.1 A2.1 2.1 0 0 1 -0.30 1.61"/></g></svg>
<div class="ab t b" style="left:913px;top:399.14px;width:63.24324324324324px;height:18.48px;line-height:18.48px;overflow:hidden;white-space:nowrap">Pkg</div>
<svg class="ab" style="left:977.4px;top:400.44px" width="11.7" height="11.7" viewBox="0 0 11 11"><g fill="none" stroke="#5479b3" stroke-width="1.4" stroke-linecap="round" transform="translate(5.6 5.5) rotate(-45)"><path d="M1.05 0 A2.1 2.1 0 0 1 -1.05 2.1 L-2.75 2.1 A2.1 2.1 0 0 1 -2.75 -2.1 L-1.05 -2.1 A2.1 2.1 0 0 1 0.30 -1.61"/><path d="M-1.05 0 A2.1 2.1 0 0 1 1.05 -2.1 L2.75 -2.1 A2.1 2.1 0 0 1 2.75 2.1 L1.05 2.1 A2.1 2.1 0 0 1 -0.30 1.61"/></g></svg>
<div class="ab t" style="left:991px;top:399.14px;width:30px;height:18.48px;line-height:18.48px;">Pkg</div>
<svg class="ab" style="left:1069.8000000000002px;top:400.44px" width="11.7" height="11.7" viewBox="0 0 11 11"><g fill="none" stroke="#5479b3" stroke-width="1.4" stroke-linecap="round" transform="translate(5.6 5.5) rotate(-45)"><path d="M1.05 0 A2.1 2.1 0 0 1 -1.05 2.1 L-2.75 2.1 A2.1 2.1 0 0 1 -2.75 -2.1 L-1.05 -2.1 A2.1 2.1 0 0 1 0.30 -1.61"/><path d="M-1.05 0 A2.1 2.1 0 0 1 1.05 -2.1 L2.75 -2.1 A2.1 2.1 0 0 1 2.75 2.1 L1.05 2.1 A2.1 2.1 0 0 1 -0.30 1.61"/></g></svg>
<div class="ab t" style="left:1084px;top:399.14px;width:30px;height:18.48px;line-height:18.48px;">Off</div>
<div class="ab t ra" style="left:1067.5px;top:399.14px;width:87.0px;height:18.48px;line-height:18.48px;">$24,650.00</div>
<div class="ab t" style="left:37px;top:417.62px;width:80px;height:18.48px;line-height:18.48px;">4.2.3</div>
<div class="ab t" style="left:121px;top:417.62px;width:160px;height:18.48px;line-height:18.48px;">Truncated domes</div>
<div class="ab t ra" style="left:270.5px;top:417.62px;width:79.2px;height:18.48px;line-height:18.48px;">1.00</div>
<div class="ab t" style="left:359.5px;top:417.62px;width:80px;height:18.48px;line-height:18.48px;letter-spacing:-0.6px">Lump Sum</div>
<div class="ab t ra" style="left:434.5px;top:417.62px;width:71.7px;height:18.48px;line-height:18.48px;">$12,117.65</div>
<svg class="ab" style="left:512.1px;top:418.72px" width="14" height="13" viewBox="0 0 14 13"><path d="M7 0.8 C3.6 0.8 1.2 2.7 1.2 5.1 C1.2 6.6 2.1 7.8 3.5 8.6 L2.6 12.2 L6.2 9.3 C6.5 9.35 6.7 9.4 7 9.4 C10.4 9.4 12.8 7.5 12.8 5.1 C12.8 2.7 10.4 0.8 7 0.8 Z" fill="none" stroke="#4a77b4" stroke-width="1.4" stroke-linejoin="round"/><path d="M3.5 8.6 L2.6 12.2 L5 10.2 Z" fill="#4a77b4"/></svg>
<div class="ab t ra" style="left:511px;top:417.62px;width:88.5px;height:18.48px;line-height:18.48px;">$12,117.65</div>
<div class="ab t ra" style="left:604.5px;top:417.62px;width:88.0px;height:18.48px;line-height:18.48px;">$6,000.00</div>
<div class="ab t ra r" style="left:697.5px;top:417.62px;width:87.0px;height:18.48px;line-height:18.48px;">$6,000.00</div>
<div class="ab t ra r" style="left:789.5px;top:417.62px;width:88.5px;height:18.48px;line-height:18.48px;">$6,000.00</div>
<svg class="ab" style="left:887.3px;top:418.72px" width="7" height="14" viewBox="0 0 7 14"><circle cx="3.3" cy="3.1" r="3.0" fill="#2db24c"/><path d="M1.6 7.3 L5.0 7.3 L5.3 12.8 L3.3 11.4 L1.3 12.8 Z" fill="#2db24c"/></svg>
<svg class="ab" style="left:898.1999999999999px;top:418.92px" width="11.7" height="11.7" viewBox="0 0 11 11"><g fill="none" stroke="#5479b3" stroke-width="1.4" stroke-linecap="round" transform="translate(5.6 5.5) rotate(-45)"><path d="M1.05 0 A2.1 2.1 0 0 1 -1.05 2.1 L-2.75 2.1 A2.1 2.1 0 0 1 -2.75 -2.1 L-1.05 -2.1 A2.1 2.1 0 0 1 0.30 -1.61"/><path d="M-1.05 0 A2.1 2.1 0 0 1 1.05 -2.1 L2.75 -2.1 A2.1 2.1 0 0 1 2.75 2.1 L1.05 2.1 A2.1 2.1 0 0 1 -0.30 1.61"/></g></svg>
<div class="ab t b" style="left:913px;top:417.62px;width:63.24324324324324px;height:18.48px;line-height:18.48px;overflow:hidden;white-space:nowrap">Pkg</div>
<svg class="ab" style="left:977.4px;top:418.92px" width="11.7" height="11.7" viewBox="0 0 11 11"><g fill="none" stroke="#5479b3" stroke-width="1.4" stroke-linecap="round" transform="translate(5.6 5.5) rotate(-45)"><path d="M1.05 0 A2.1 2.1 0 0 1 -1.05 2.1 L-2.75 2.1 A2.1 2.1 0 0 1 -2.75 -2.1 L-1.05 -2.1 A2.1 2.1 0 0 1 0.30 -1.61"/><path d="M-1.05 0 A2.1 2.1 0 0 1 1.05 -2.1 L2.75 -2.1 A2.1 2.1 0 0 1 2.75 2.1 L1.05 2.1 A2.1 2.1 0 0 1 -0.30 1.61"/></g></svg>
<div class="ab t" style="left:991px;top:417.62px;width:30px;height:18.48px;line-height:18.48px;">Pkg</div>
<svg class="ab" style="left:1069.8000000000002px;top:418.92px" width="11.7" height="11.7" viewBox="0 0 11 11"><g fill="none" stroke="#5479b3" stroke-width="1.4" stroke-linecap="round" transform="translate(5.6 5.5) rotate(-45)"><path d="M1.05 0 A2.1 2.1 0 0 1 -1.05 2.1 L-2.75 2.1 A2.1 2.1 0 0 1 -2.75 -2.1 L-1.05 -2.1 A2.1 2.1 0 0 1 0.30 -1.61"/><path d="M-1.05 0 A2.1 2.1 0 0 1 1.05 -2.1 L2.75 -2.1 A2.1 2.1 0 0 1 2.75 2.1 L1.05 2.1 A2.1 2.1 0 0 1 -0.30 1.61"/></g></svg>
<div class="ab t" style="left:1084px;top:417.62px;width:30px;height:18.48px;line-height:18.48px;">Off</div>
<div class="ab t" style="left:37px;top:436.1px;width:80px;height:18.48px;line-height:18.48px;">4.2.4</div>
<div class="ab t" style="left:121px;top:436.1px;width:160px;height:18.48px;line-height:18.48px;">Planter curbs</div>
<div class="ab t ra" style="left:270.5px;top:436.1px;width:79.2px;height:18.48px;line-height:18.48px;">150.00</div>
<div class="ab t" style="left:359.5px;top:436.1px;width:80px;height:18.48px;line-height:18.48px;letter-spacing:-0.6px">LF</div>
<div class="ab t ra" style="left:434.5px;top:436.1px;width:71.7px;height:18.48px;line-height:18.48px;">$80.78</div>
<svg class="ab" style="left:512.1px;top:437.2px" width="14" height="13" viewBox="0 0 14 13"><path d="M7 0.8 C3.6 0.8 1.2 2.7 1.2 5.1 C1.2 6.6 2.1 7.8 3.5 8.6 L2.6 12.2 L6.2 9.3 C6.5 9.35 6.7 9.4 7 9.4 C10.4 9.4 12.8 7.5 12.8 5.1 C12.8 2.7 10.4 0.8 7 0.8 Z" fill="none" stroke="#4a77b4" stroke-width="1.4" stroke-linejoin="round"/><path d="M3.5 8.6 L2.6 12.2 L5 10.2 Z" fill="#4a77b4"/></svg>
<div class="ab t ra" style="left:511px;top:436.1px;width:88.5px;height:18.48px;line-height:18.48px;">$12,117.65</div>
<div class="ab t ra o" style="left:604.5px;top:436.1px;width:88.0px;height:18.48px;line-height:18.48px;">$4,125.88</div>
<div class="ab t ra" style="left:697.5px;top:436.1px;width:87.0px;height:18.48px;line-height:18.48px;">$4,125.88</div>
<div class="ab t ra o" style="left:789.5px;top:436.1px;width:88.5px;height:18.48px;line-height:18.48px;">$4,125.88</div>
<svg class="ab" style="left:887.3px;top:437.2px" width="7" height="14" viewBox="0 0 7 14"><circle cx="3.3" cy="3.1" r="3.0" fill="#2db24c"/><path d="M1.6 7.3 L5.0 7.3 L5.3 12.8 L3.3 11.4 L1.3 12.8 Z" fill="#2db24c"/></svg>
<svg class="ab" style="left:898.1999999999999px;top:437.4px" width="11.7" height="11.7" viewBox="0 0 11 11"><g fill="none" stroke="#5479b3" stroke-width="1.4" stroke-linecap="round" transform="translate(5.6 5.5) rotate(-45)"><path d="M1.05 0 A2.1 2.1 0 0 1 -1.05 2.1 L-2.75 2.1 A2.1 2.1 0 0 1 -2.75 -2.1 L-1.05 -2.1 A2.1 2.1 0 0 1 0.30 -1.61"/><path d="M-1.05 0 A2.1 2.1 0 0 1 1.05 -2.1 L2.75 -2.1 A2.1 2.1 0 0 1 2.75 2.1 L1.05 2.1 A2.1 2.1 0 0 1 -0.30 1.61"/></g></svg>
<div class="ab t b" style="left:913px;top:436.1px;width:63.24324324324324px;height:18.48px;line-height:18.48px;overflow:hidden;white-space:nowrap">Pkg</div>
<svg class="ab" style="left:977.4px;top:437.4px" width="11.7" height="11.7" viewBox="0 0 11 11"><g fill="none" stroke="#5479b3" stroke-width="1.4" stroke-linecap="round" transform="translate(5.6 5.5) rotate(-45)"><path d="M1.05 0 A2.1 2.1 0 0 1 -1.05 2.1 L-2.75 2.1 A2.1 2.1 0 0 1 -2.75 -2.1 L-1.05 -2.1 A2.1 2.1 0 0 1 0.30 -1.61"/><path d="M-1.05 0 A2.1 2.1 0 0 1 1.05 -2.1 L2.75 -2.1 A2.1 2.1 0 0 1 2.75 2.1 L1.05 2.1 A2.1 2.1 0 0 1 -0.30 1.61"/></g></svg>
<div class="ab t" style="left:991px;top:436.1px;width:30px;height:18.48px;line-height:18.48px;">Pkg</div>
<div class="ab t ra o" style="left:1067.5px;top:436.1px;width:87.0px;height:18.48px;line-height:18.48px;">$4,125.88</div>
<div class="ab t" style="left:37px;top:454.58px;width:80px;height:18.48px;line-height:18.48px;">4.2.5</div>
<div class="ab t" style="left:121px;top:454.58px;width:160px;height:18.48px;line-height:18.48px;">Reinforcing</div>
<div class="ab t ra" style="left:270.5px;top:454.58px;width:79.2px;height:18.48px;line-height:18.48px;">861.00</div>
<div class="ab t" style="left:359.5px;top:454.58px;width:80px;height:18.48px;line-height:18.48px;letter-spacing:-0.6px">lb</div>
<div class="ab t ra" style="left:434.5px;top:454.58px;width:71.7px;height:18.48px;line-height:18.48px;">$14.07</div>
<svg class="ab" style="left:512.1px;top:455.68px" width="14" height="13" viewBox="0 0 14 13"><path d="M7 0.8 C3.6 0.8 1.2 2.7 1.2 5.1 C1.2 6.6 2.1 7.8 3.5 8.6 L2.6 12.2 L6.2 9.3 C6.5 9.35 6.7 9.4 7 9.4 C10.4 9.4 12.8 7.5 12.8 5.1 C12.8 2.7 10.4 0.8 7 0.8 Z" fill="none" stroke="#4a77b4" stroke-width="1.4" stroke-linejoin="round"/><path d="M3.5 8.6 L2.6 12.2 L5 10.2 Z" fill="#4a77b4"/></svg>
<div class="ab t ra" style="left:511px;top:454.58px;width:88.5px;height:18.48px;line-height:18.48px;">$12,117.65</div>
<div class="ab t ra" style="left:604.5px;top:454.58px;width:88.0px;height:18.48px;line-height:18.48px;">$1,500.00</div>
<div class="ab t ra" style="left:697.5px;top:454.58px;width:87.0px;height:18.48px;line-height:18.48px;">$430.50</div>
<div class="ab t ra o" style="left:789.5px;top:454.58px;width:88.5px;height:18.48px;line-height:18.48px;">$430.50</div>
<svg class="ab" style="left:887.3px;top:455.68px" width="7" height="14" viewBox="0 0 7 14"><circle cx="3.3" cy="3.1" r="3.0" fill="#2db24c"/><path d="M1.6 7.3 L5.0 7.3 L5.3 12.8 L3.3 11.4 L1.3 12.8 Z" fill="#2db24c"/></svg>
<svg class="ab" style="left:898.1999999999999px;top:455.88px" width="11.7" height="11.7" viewBox="0 0 11 11"><g fill="none" stroke="#5479b3" stroke-width="1.4" stroke-linecap="round" transform="translate(5.6 5.5) rotate(-45)"><path d="M1.05 0 A2.1 2.1 0 0 1 -1.05 2.1 L-2.75 2.1 A2.1 2.1 0 0 1 -2.75 -2.1 L-1.05 -2.1 A2.1 2.1 0 0 1 0.30 -1.61"/><path d="M-1.05 0 A2.1 2.1 0 0 1 1.05 -2.1 L2.75 -2.1 A2.1 2.1 0 0 1 2.75 2.1 L1.05 2.1 A2.1 2.1 0 0 1 -0.30 1.61"/></g></svg>
<div class="ab t b" style="left:913px;top:454.58px;width:63.24324324324324px;height:18.48px;line-height:18.48px;overflow:hidden;white-space:nowrap">Pkg</div>
<svg class="ab" style="left:977.4px;top:455.88px" width="11.7" height="11.7" viewBox="0 0 11 11"><g fill="none" stroke="#5479b3" stroke-width="1.4" stroke-linecap="round" transform="translate(5.6 5.5) rotate(-45)"><path d="M1.05 0 A2.1 2.1 0 0 1 -1.05 2.1 L-2.75 2.1 A2.1 2.1 0 0 1 -2.75 -2.1 L-1.05 -2.1 A2.1 2.1 0 0 1 0.30 -1.61"/><path d="M-1.05 0 A2.1 2.1 0 0 1 1.05 -2.1 L2.75 -2.1 A2.1 2.1 0 0 1 2.75 2.1 L1.05 2.1 A2.1 2.1 0 0 1 -0.30 1.61"/></g></svg>
<div class="ab t" style="left:991px;top:454.58px;width:30px;height:18.48px;line-height:18.48px;">Pkg</div>
<div class="ab t ra o" style="left:1067.5px;top:454.58px;width:87.0px;height:18.48px;line-height:18.48px;">$430.50</div>
<div class="ab t b bs" style="left:120.5px;top:472.96px;width:150px;height:18.48px;line-height:18.48px;">Scope Items</div>
<div class="ab t" style="left:130px;top:491.44px;width:150px;height:18.48px;line-height:18.48px;">Acknowledged Addendum</div>
<div class="ab t" style="left:130px;top:509.92px;width:150px;height:18.48px;line-height:18.48px;">Survey/Layout</div>
<div class="ab t" style="left:130px;top:528.4px;width:150px;height:18.48px;line-height:18.48px;">Waterproofing</div>
<div class="ab t b bs" style="left:120.5px;top:546.88px;width:150px;height:18.48px;line-height:18.48px;">Summary</div>
<div class="ab t" style="left:130px;top:565.36px;width:150px;height:18.48px;line-height:18.48px;">Minority Type</div>
<div class="ab cb" style="left:833.3px;top:494.9800000000001px"></div>
<svg class="ab" style="left:923.5px;top:493.68000000000006px" width="11" height="11" viewBox="0 0 11 11"><rect x="1.6" y="2" width="6.8" height="6.8" rx="0.8" fill="#f7f7f7" stroke="#2a2a2a" stroke-width="1.1"/><path d="M1.7 4.2 L3.6 8 L9.6 3" stroke="#222" stroke-width="1.3" fill="none" stroke-linejoin="round"/></svg>
<div class="ab cb" style="left:1018px;top:494.9800000000001px"></div>
<svg class="ab" style="left:1108.2px;top:493.68000000000006px" width="11" height="11" viewBox="0 0 11 11"><rect x="1.6" y="2" width="6.8" height="6.8" rx="0.8" fill="#f7f7f7" stroke="#2a2a2a" stroke-width="1.1"/><path d="M1.7 4.2 L3.6 8 L9.6 3" stroke="#222" stroke-width="1.3" fill="none" stroke-linejoin="round"/></svg>
<div class="ab cb" style="left:833.3px;top:513.4599999999999px"></div>
<div class="ab cb" style="left:925.5px;top:513.4599999999999px"></div>
<div class="ab cb" style="left:1018px;top:513.4599999999999px"></div>
<div class="ab t ra" style="left:1067.5px;top:509.82px;width:87.0px;height:18.48px;line-height:18.48px;">$500.00</div>
<div class="ab cb" style="left:833.3px;top:531.9399999999999px"></div>
<div class="ab cb" style="left:925.5px;top:531.9399999999999px"></div>
<div class="ab cb" style="left:1018px;top:531.9399999999999px"></div>
<svg class="ab" style="left:1108.2px;top:530.64px" width="11" height="11" viewBox="0 0 11 11"><rect x="1.6" y="2" width="6.8" height="6.8" rx="0.8" fill="#f7f7f7" stroke="#2a2a2a" stroke-width="1.1"/><path d="M1.7 4.2 L3.6 8 L9.6 3" stroke="#222" stroke-width="1.3" fill="none" stroke-linejoin="round"/></svg>
<svg class="ab" style="left:791.5px;top:566.1600000000001px" width="14" height="13" viewBox="0 0 14 13"><path d="M4 1.2 H10 L12.8 6.5 L10 11.8 H4 L1.2 6.5 Z" fill="#d3d21c" stroke="#d3d21c" stroke-width="1.6" stroke-linejoin="round"/><text x="7" y="9" font-size="6.8" font-weight="bold" fill="#fbfbe8" text-anchor="middle" font-family="Liberation Sans">M</text></svg>
<div class="ab t ra b" style="left:789.5px;top:565.06px;width:87.7px;height:18.48px;line-height:18.48px;font-size:9.5px;letter-spacing:-0.7px;-webkit-text-stroke:0.25px #111">DBE</div>
<div class="ab" style="left:33px;top:576px;width:1141.5px;height:14px;background:#f9f9f9"></div>
<div class="ab" style="left:46px;top:576px;width:980px;height:14px;background:#d9d9d9"></div>
<svg class="ab" style="left:37.4px;top:580.5px" width="4.3" height="5.4" viewBox="0 0 4.3 5.4"><polygon points="4.3,0 4.3,5.4 0,2.7" fill="#3c3c3c"/></svg>
<svg class="ab" style="left:1166px;top:580.5px" width="4.3" height="5.4" viewBox="0 0 4.3 5.4"><polygon points="0,0 0,5.4 4.3,2.7" fill="#3c3c3c"/></svg>
<div class="ab" style="left:1182.3px;top:73px;width:13.7px;height:524px;background:#fafafa"></div>
<div class="ab" style="left:1182.3px;top:86.7px;width:13.7px;height:299.3px;background:#d6d6d6"></div>
<svg class="ab" style="left:1186.7px;top:77.8px" width="5.3" height="4.1" viewBox="0 0 5.3 4.1"><polygon points="0,4.1 5.3,4.1 2.65,0" fill="#444"/></svg>
<svg class="ab" style="left:1186.6px;top:588.1px" width="5.3" height="4.1" viewBox="0 0 5.3 4.1"><polygon points="0,0 5.3,0 2.65,4.1" fill="#444"/></svg>
<div class="ab" style="left:5px;top:596.5px;width:1190px;height:1px;background:#d6d6d6"></div>
<div class="ab" style="left:32px;top:595.5px;width:1150px;height:1px;background:#e6e6e6"></div>
<div class="ab t ra b" style="left:161px;top:600.4px;width:117.7px;height:20px;line-height:20px;font-size:10.75px">$0.00</div>
<div class="ab t ra b" style="left:257.5px;top:600.4px;width:117.7px;height:20px;line-height:20px;font-size:10.75px">$111,118.03</div>
<div class="ab t ra b" style="left:354px;top:600.4px;width:117.7px;height:20px;line-height:20px;font-size:10.75px">$12,817,777.12</div>
<div class="ab t ra b" style="left:455px;top:600.4px;width:117.7px;height:20px;line-height:20px;font-size:10.75px">$12,928,895.16</div>
</body></html>
